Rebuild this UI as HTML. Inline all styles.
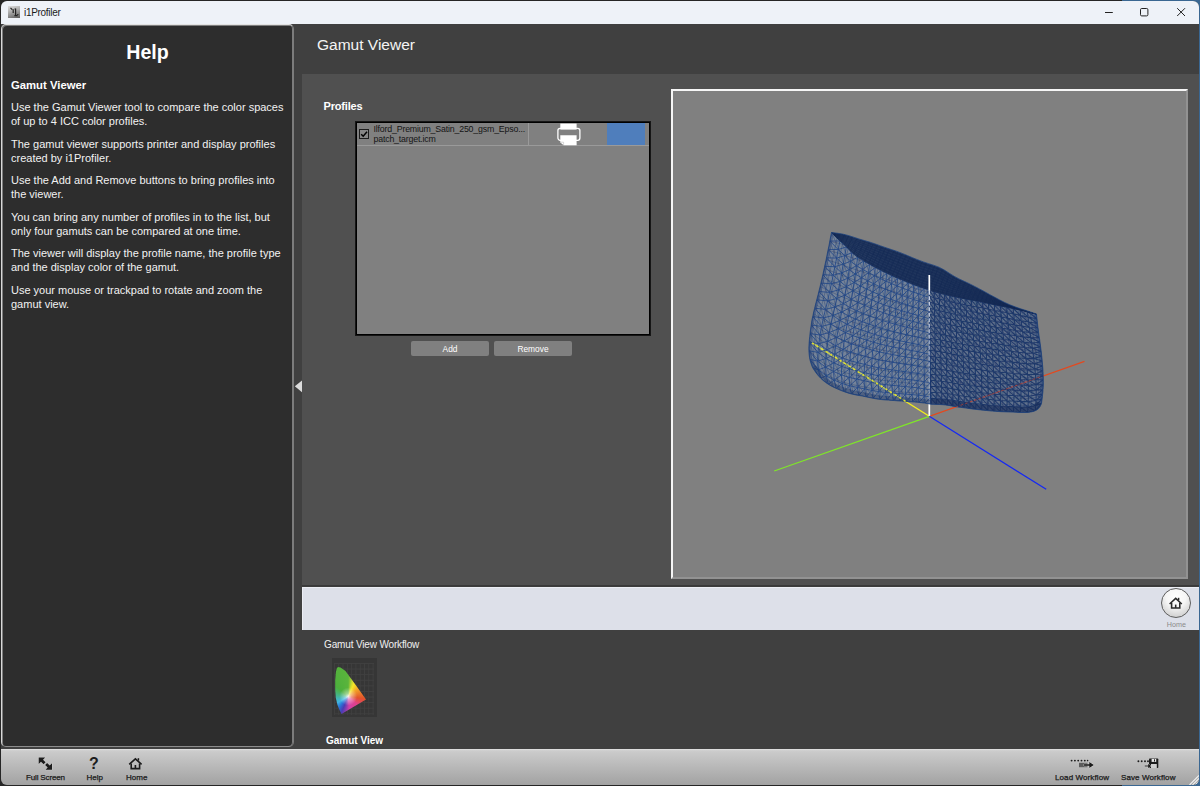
<!DOCTYPE html>
<html>
<head>
<meta charset="utf-8">
<title>i1Profiler</title>
<style>
html,body{margin:0;padding:0;}
body{width:1200px;height:786px;overflow:hidden;position:relative;background:#262626;font-family:"Liberation Sans",sans-serif;}
.abs{position:absolute;}
#bgR{left:1122px;top:0;width:78px;height:786px;background:#3a6792;}
#win{left:1px;top:1px;width:1198px;height:783.6px;border-radius:6px;overflow:hidden;background:#404040;}
#title{left:0;top:0;width:1198px;height:23px;background:#eef2f8;}
#title .t{left:23px;top:6px;font-size:10px;line-height:12px;color:#1a1a1a;letter-spacing:-0.3px;}
#help{left:0px;top:23px;width:291px;height:720.5px;background:#2d2d2d;border:1px solid #7c7c7c;border-color:#e2e2e2 #7c7c7c #8c8c8c #d8d8d8;border-radius:5px;box-shadow:inset 1px 1px 0 #7e7e7e,inset -1px 0 0 #7c7c7c;}
#help h1{position:absolute;left:1px;width:289px;top:15.5px;margin:0;text-align:center;font-size:19.6px;font-weight:bold;color:#fff;}
#help .hd{position:absolute;left:9px;top:54px;font-size:11.3px;font-weight:bold;color:#fff;}
#help p{position:absolute;left:9px;margin:0;font-size:11px;line-height:14px;color:#f2f2f2;white-space:nowrap;}
#main{left:293px;top:23px;width:905px;height:724px;background:#404040;}
#mtitle{left:316px;top:35.4px;font-size:15.5px;color:#f4f4f4;}
#content{left:300.6px;top:73px;width:897.4px;height:511.2px;background:#505050;box-shadow:0 1.4px 0 #3a3a3a;}
#lightbar{left:300.6px;top:585.6px;width:897.4px;height:43.7px;background:#dde0e9;box-shadow:inset 1px 1px 0 #eceef4;}
#toolbar{left:0;top:747.6px;width:1198px;height:36px;background:linear-gradient(#e4e4e4 0,#cecece 1.6px,#cacaca 3px,#a2a2a2 100%);}

#plabel{left:322.6px;top:99.1px;font-size:11px;font-weight:bold;color:#fff;letter-spacing:-0.2px;}
#list{left:354.5px;top:121px;width:292.4px;height:211px;background:#808080;border:1px solid #000;box-shadow:0 0 0 1px rgba(0,0,0,0.72);}
#row{left:0;top:0;width:292.4px;height:22px;border-bottom:1px solid #9a9a9a;}
#cb{left:2.5px;top:6px;width:8px;height:8px;border:1px solid #1c1c1c;background:#858585;}
#rtxt{left:17px;top:1.8px;font-size:8.8px;line-height:9.8px;color:#151515;white-space:nowrap;letter-spacing:-0.18px;}
#sep1{left:171.8px;top:0;width:1px;height:22px;background:#9a9a9a;}
#swatch{left:250.8px;top:0;width:38px;height:22px;background:#4f7ebc;}
.btn{position:absolute;top:340px;width:78px;height:15px;border-radius:2px;background:#808080;color:#fff;font-size:8.4px;line-height:17.5px;text-align:center;}
#viewer{left:670px;top:88px;width:513px;height:486px;background:#808080;border:2px solid #fff;border-color:#f6f6f6 #929292 #929292 #f6f6f6;}
#homebtn{left:1160px;top:587px;width:28.4px;height:28.4px;border-radius:50%;border:1.2px solid #5e5e5e;background:radial-gradient(circle at 50% 30%,#ffffff 0,#f6f6f6 40%,#d4d4d4 78%,#c2c2c2 100%);}
#homelbl{left:1160px;top:619px;width:30.8px;text-align:center;font-size:7.2px;line-height:9px;color:#8a8a8a;}
#wflabel{left:323px;top:638.2px;font-size:10px;letter-spacing:-0.15px;color:#f0f0f0;}
#gicon{left:331px;top:657px;width:45px;height:59px;background:#363636;}
#ggrid{left:1.5px;top:5px;width:40px;height:52px;background-image:linear-gradient(to right,#4a4a4a 1px,transparent 1px),linear-gradient(to bottom,#4a4a4a 1px,transparent 1px);background-size:4.3px 5.6px;opacity:0.5;}
#ghorse{left:0;top:0;width:45px;height:59px;clip-path:polygon(5.9px 9.1px,8.5px 9.6px,13.5px 13.1px,19.7px 21.6px,25px 28.7px,34px 41.6px,9.5px 55.9px,7.5px 52px,5.5px 47px,3.8px 40px,3.2px 32px,3.2px 22px,3.9px 14px,4.8px 10.5px);
 background:radial-gradient(circle at 16.2px 38.5px,rgba(255,255,255,0.9) 0,rgba(255,255,255,0.45) 3px,rgba(255,255,255,0) 9px),conic-gradient(from 0deg at 16.2px 38.5px,#5ab43c 0deg,#c4d632 14deg,#f4e628 24deg,#f2a428 50deg,#e2522a 98deg,#e0408a 132deg,#d040a8 175deg,#4a3cb4 203deg,#2a78d8 222deg,#40b4e4 240deg,#44b48c 275deg,#4caf3c 310deg,#5ab43c 360deg);}
#gvlabel{left:325px;top:734px;font-size:10px;font-weight:bold;color:#fff;}

#appicon{left:6.5px;top:5px;width:12px;height:12px;background:linear-gradient(160deg,#e0e0e0 0%,#a8a8a8 45%,#5a5a5a 100%);}
.tl{position:absolute;font-size:8px;color:#1a1a1a;white-space:nowrap;top:24.4px;line-height:9px;text-align:center;-webkit-text-stroke:0.25px #1a1a1a;}

</style>
</head>
<body>
<div id="bgR" class="abs"></div>
<div id="win" class="abs">
  <div id="title" class="abs"><div id="appicon" class="abs"><svg width="12" height="12" viewBox="0 0 12 12" style="position:absolute;left:0;top:0"><path d="M2.5 1.8 L4.2 3.6 M5.2 3.2 V7 M7.6 2.6 V9.6 M6.6 3.4 L7.6 2.6 M6.4 9.6 H9.6 M9.8 8 V9" stroke="#222" stroke-width="1.2" fill="none"/></svg></div><span class="abs t">i1Profiler</span>
    <svg class="abs" style="left:1100px;top:4px" width="92" height="16" viewBox="1101 5 92 16">
      <path d="M1105 12.5 H1112.8" stroke="#222" stroke-width="1" fill="none"/>
      <rect x="1140.5" y="8.5" width="7.4" height="7.4" rx="1.2" fill="none" stroke="#222" stroke-width="1"/>
      <path d="M1177.2 8.2 L1185 16 M1185 8.2 L1177.2 16" stroke="#222" stroke-width="1" fill="none"/>
    </svg></div>
  <div id="main" class="abs"></div>
  <div id="mtitle" class="abs">Gamut Viewer</div>
  <div id="content" class="abs"></div>
  <div id="lightbar" class="abs"></div>

  <div id="plabel" class="abs">Profiles</div>
  <div id="list" class="abs">
    <div id="row" class="abs">
      <div id="cb" class="abs"><svg width="8" height="8" viewBox="0 0 8 8" style="position:absolute;left:0;top:0"><path d="M1.2 4.2 L3.2 6.2 L7 1.8" fill="none" stroke="#000" stroke-width="1.5"/></svg></div>
      <div id="rtxt" class="abs">Ilford_Premium_Satin_250_gsm_Epso...<br>patch_target.icm</div>
      <div id="sep1" class="abs"></div>
      <svg class="abs" style="left:199px;top:0" width="28" height="23" viewBox="0 0 28 23">
        <rect x="4.3" y="0.6" width="16.3" height="6" fill="#fff"/>
        <rect x="1.9" y="5.3" width="22" height="12" rx="2.2" fill="none" stroke="#fff" stroke-width="1.3"/>
        <path d="M4.3 12.3 H20.6 V22.2 H7.6 L4.3 19.4 Z" fill="#fff"/>
        <path d="M4.6 19.2 L7.6 19.2 L7.6 22" fill="none" stroke="#bbb" stroke-width="0.6"/>
      </svg>
      <div id="swatch" class="abs"></div>
    </div>
  </div>
  <div class="btn" style="left:410px">Add</div>
  <div class="btn" style="left:493px">Remove</div>
  <div id="viewer" class="abs"><!--MESH--></div>
  <!--MESH_START--><svg class="abs" style="left:0;top:0" width="1198" height="784" viewBox="1 1 1198 784">
<defs><clipPath id="sil"><path d="M831.5 232.5L837.1 233.2L842.7 234.1L848.3 235.5L853.7 237.2L859.1 239.0L864.5 240.6L870.0 242.2L875.4 244.0L880.7 245.9L886.1 247.8L891.5 249.6L896.9 251.4L902.2 253.4L907.5 255.6L912.7 257.8L918.0 259.9L923.3 261.9L928.7 263.7L934.1 265.4L939.4 267.4L944.4 270.1L949.2 273.2L954.0 276.2L959.0 278.9L964.2 281.3L969.3 283.7L974.4 286.3L979.4 288.9L984.4 291.6L989.4 294.4L994.4 297.1L999.4 299.8L1004.5 302.4L1009.6 304.7L1014.9 306.8L1020.3 308.7L1025.7 310.4L1031.1 312.2L1036.5 314.0L1036.5 314.0L1036.7 316.3L1037.0 318.6L1037.2 320.9L1037.5 323.2L1037.7 325.5L1038.0 327.8L1038.3 330.0L1038.6 332.3L1038.9 334.6L1039.2 336.9L1039.6 339.2L1039.9 341.5L1040.2 343.8L1040.5 346.0L1040.8 348.3L1041.1 350.6L1041.4 352.9L1041.6 355.2L1041.9 357.5L1042.1 359.8L1042.3 362.1L1042.5 364.4L1042.7 366.7L1042.9 369.0L1043.0 371.3L1043.1 373.6L1043.2 375.9L1043.3 378.2L1043.3 380.5L1043.3 382.8L1043.3 385.1L1043.2 387.4L1043.0 389.7L1042.9 392.0L1042.6 394.3L1042.4 396.6L1042.1 398.9L1041.8 401.2L1041.5 403.5L1041.5 403.5L1040.3 406.2L1038.6 408.6L1036.2 410.3L1033.5 411.4L1030.6 412.0L1027.7 412.4L1024.8 412.5L1021.8 412.5L1018.9 412.4L1015.9 412.2L1013.0 412.1L1010.1 412.0L1007.1 411.9L1004.2 411.8L1001.2 411.7L998.3 411.5L995.3 411.3L992.4 411.1L989.5 410.8L986.5 410.5L983.6 410.2L980.7 409.9L977.8 409.6L974.8 409.2L971.9 408.9L969.0 408.5L966.1 408.1L963.2 407.7L960.2 407.3L957.3 406.9L954.4 406.4L951.5 405.9L948.6 405.4L945.7 405.0L942.8 404.7L939.8 404.5L936.9 404.4L933.9 404.3L931.0 404.2L931.0 404.2L927.7 403.6L924.5 403.1L921.2 402.7L917.9 402.3L914.6 402.0L911.4 401.8L908.1 401.6L904.8 401.3L901.5 401.1L898.2 400.9L894.9 400.6L891.6 400.4L888.3 400.1L885.0 399.9L881.7 399.6L878.4 399.2L875.2 398.7L871.9 398.1L868.7 397.4L865.5 396.7L862.2 396.0L859.0 395.5L855.7 394.9L852.5 394.2L849.3 393.4L846.2 392.4L843.1 391.3L840.0 390.1L837.0 388.8L834.0 387.4L831.0 385.9L828.2 384.2L825.4 382.3L822.9 380.3L820.5 378.0L818.2 375.6L816.2 373.0L814.3 370.3L812.5 367.5L812.5 367.5L811.3 364.2L810.2 360.8L809.5 357.4L809.1 353.9L808.9 350.3L808.9 346.8L809.1 343.3L809.4 339.7L809.8 336.2L810.1 332.7L810.6 329.2L811.1 325.7L811.6 322.2L812.2 318.7L813.0 315.3L813.7 311.8L814.6 308.4L815.4 304.9L816.3 301.5L817.2 298.1L818.1 294.7L818.9 291.3L819.8 287.8L820.6 284.4L821.4 280.9L822.2 277.5L823.0 274.1L823.7 270.6L824.5 267.1L825.2 263.7L826.0 260.2L826.7 256.8L827.4 253.3L828.1 249.8L828.8 246.4L829.5 242.9L830.1 239.4L830.8 236.0L831.5 232.5Z"/></clipPath><linearGradient id="lidg" gradientUnits="userSpaceOnUse" x1="831" y1="0" x2="1036" y2="0"><stop offset="0" stop-color="#172e58" stop-opacity="0.8"/><stop offset="0.25" stop-color="#162c56" stop-opacity="0.9"/><stop offset="1" stop-color="#152a54" stop-opacity="0.93"/></linearGradient><linearGradient id="wl" gradientUnits="userSpaceOnUse" x1="0" y1="290" x2="0" y2="403"><stop offset="0" stop-color="#eef3fd" stop-opacity="0.9"/><stop offset="0.5" stop-color="#dfe8fa" stop-opacity="0.6"/><stop offset="1" stop-color="#cfdcf5" stop-opacity="0.28"/></linearGradient><filter id="soft" x="-5%" y="-5%" width="110%" height="110%"><feGaussianBlur stdDeviation="0.45"/></filter></defs>
<g stroke-width="1.3" stroke-linecap="butt" fill="none">
<path d="M929.3 416.3 L1084.5 361.3" stroke="#e2491f"/>
<path d="M929.3 416.3 L812.1 342.9" stroke="#f2ee1c"/>
<path d="M929.3 403 V416.3" stroke="#fff" stroke-width="1.7"/>
</g>
<path d="M831.5 232.5L837.1 233.2L842.7 234.1L848.3 235.5L853.7 237.2L859.1 239.0L864.5 240.6L870.0 242.2L875.4 244.0L880.7 245.9L886.1 247.8L891.5 249.6L896.9 251.4L902.2 253.4L907.5 255.6L912.7 257.8L918.0 259.9L923.3 261.9L928.7 263.7L934.1 265.4L939.4 267.4L944.4 270.1L949.2 273.2L954.0 276.2L959.0 278.9L964.2 281.3L969.3 283.7L974.4 286.3L979.4 288.9L984.4 291.6L989.4 294.4L994.4 297.1L999.4 299.8L1004.5 302.4L1009.6 304.7L1014.9 306.8L1020.3 308.7L1025.7 310.4L1031.1 312.2L1036.5 314.0L1036.5 314.0L1036.7 316.3L1037.0 318.6L1037.2 320.9L1037.5 323.2L1037.7 325.5L1038.0 327.8L1038.3 330.0L1038.6 332.3L1038.9 334.6L1039.2 336.9L1039.6 339.2L1039.9 341.5L1040.2 343.8L1040.5 346.0L1040.8 348.3L1041.1 350.6L1041.4 352.9L1041.6 355.2L1041.9 357.5L1042.1 359.8L1042.3 362.1L1042.5 364.4L1042.7 366.7L1042.9 369.0L1043.0 371.3L1043.1 373.6L1043.2 375.9L1043.3 378.2L1043.3 380.5L1043.3 382.8L1043.3 385.1L1043.2 387.4L1043.0 389.7L1042.9 392.0L1042.6 394.3L1042.4 396.6L1042.1 398.9L1041.8 401.2L1041.5 403.5L1041.5 403.5L1040.3 406.2L1038.6 408.6L1036.2 410.3L1033.5 411.4L1030.6 412.0L1027.7 412.4L1024.8 412.5L1021.8 412.5L1018.9 412.4L1015.9 412.2L1013.0 412.1L1010.1 412.0L1007.1 411.9L1004.2 411.8L1001.2 411.7L998.3 411.5L995.3 411.3L992.4 411.1L989.5 410.8L986.5 410.5L983.6 410.2L980.7 409.9L977.8 409.6L974.8 409.2L971.9 408.9L969.0 408.5L966.1 408.1L963.2 407.7L960.2 407.3L957.3 406.9L954.4 406.4L951.5 405.9L948.6 405.4L945.7 405.0L942.8 404.7L939.8 404.5L936.9 404.4L933.9 404.3L931.0 404.2L931.0 404.2L927.7 403.6L924.5 403.1L921.2 402.7L917.9 402.3L914.6 402.0L911.4 401.8L908.1 401.6L904.8 401.3L901.5 401.1L898.2 400.9L894.9 400.6L891.6 400.4L888.3 400.1L885.0 399.9L881.7 399.6L878.4 399.2L875.2 398.7L871.9 398.1L868.7 397.4L865.5 396.7L862.2 396.0L859.0 395.5L855.7 394.9L852.5 394.2L849.3 393.4L846.2 392.4L843.1 391.3L840.0 390.1L837.0 388.8L834.0 387.4L831.0 385.9L828.2 384.2L825.4 382.3L822.9 380.3L820.5 378.0L818.2 375.6L816.2 373.0L814.3 370.3L812.5 367.5L812.5 367.5L811.3 364.2L810.2 360.8L809.5 357.4L809.1 353.9L808.9 350.3L808.9 346.8L809.1 343.3L809.4 339.7L809.8 336.2L810.1 332.7L810.6 329.2L811.1 325.7L811.6 322.2L812.2 318.7L813.0 315.3L813.7 311.8L814.6 308.4L815.4 304.9L816.3 301.5L817.2 298.1L818.1 294.7L818.9 291.3L819.8 287.8L820.6 284.4L821.4 280.9L822.2 277.5L823.0 274.1L823.7 270.6L824.5 267.1L825.2 263.7L826.0 260.2L826.7 256.8L827.4 253.3L828.1 249.8L828.8 246.4L829.5 242.9L830.1 239.4L830.8 236.0L831.5 232.5Z" fill="#5c8cd2" fill-opacity="0.31"/>
<path d="M929.2 290.3L931.9 291.1L934.6 291.9L937.3 292.6L940.0 293.4L942.8 294.1L945.5 294.8L948.2 295.5L951.0 296.1L953.7 296.7L956.5 297.3L959.3 297.8L962.0 298.4L964.8 298.9L967.6 299.4L970.3 300.0L973.1 300.5L975.9 301.0L978.6 301.6L981.4 302.1L984.2 302.7L986.9 303.3L989.7 303.8L992.4 304.4L995.2 304.9L998.0 305.5L1000.7 306.0L1003.5 306.6L1006.3 307.1L1009.0 307.6L1011.8 308.2L1014.6 308.8L1017.3 309.4L1020.1 310.0L1022.8 310.6L1025.6 311.3L1028.3 312.0L1031.0 312.6L1033.8 313.3L1036.5 314.0L1036.5 314.0L1036.7 316.3L1037.0 318.6L1037.2 320.9L1037.5 323.2L1037.7 325.5L1038.0 327.8L1038.3 330.0L1038.6 332.3L1038.9 334.6L1039.2 336.9L1039.6 339.2L1039.9 341.5L1040.2 343.8L1040.5 346.0L1040.8 348.3L1041.1 350.6L1041.4 352.9L1041.6 355.2L1041.9 357.5L1042.1 359.8L1042.3 362.1L1042.5 364.4L1042.7 366.7L1042.9 369.0L1043.0 371.3L1043.1 373.6L1043.2 375.9L1043.3 378.2L1043.3 380.5L1043.3 382.8L1043.3 385.1L1043.2 387.4L1043.0 389.7L1042.9 392.0L1042.6 394.3L1042.4 396.6L1042.1 398.9L1041.8 401.2L1041.5 403.5L1041.5 403.5L1040.3 406.2L1038.6 408.6L1036.2 410.3L1033.5 411.4L1030.6 412.0L1027.7 412.4L1024.8 412.5L1021.8 412.5L1018.9 412.4L1015.9 412.2L1013.0 412.1L1010.1 412.0L1007.1 411.9L1004.2 411.8L1001.2 411.7L998.3 411.5L995.3 411.3L992.4 411.1L989.5 410.8L986.5 410.5L983.6 410.2L980.7 409.9L977.8 409.6L974.8 409.2L971.9 408.9L969.0 408.5L966.1 408.1L963.2 407.7L960.2 407.3L957.3 406.9L954.4 406.4L951.5 405.9L948.6 405.4L945.7 405.0L942.8 404.7L939.8 404.5L936.9 404.4L933.9 404.3L931.0 404.2L931.0 404.2L930.9 401.3L930.9 398.4L930.8 395.4L930.7 392.5L930.6 389.6L930.6 386.7L930.5 383.8L930.4 380.8L930.4 377.9L930.3 375.0L930.2 372.1L930.2 369.2L930.1 366.2L930.1 363.3L930.0 360.4L930.0 357.5L929.9 354.6L929.9 351.6L929.8 348.7L929.8 345.8L929.8 342.9L929.7 340.0L929.7 337.0L929.6 334.1L929.6 331.2L929.6 328.3L929.5 325.3L929.5 322.4L929.5 319.5L929.5 316.6L929.4 313.7L929.4 310.7L929.4 307.8L929.3 304.9L929.3 302.0L929.3 299.1L929.3 296.1L929.2 293.2L929.2 290.3Z" fill="#142c5a" fill-opacity="0.2"/>
<g clip-path="url(#sil)" fill="none"><g filter="url(#soft)">
<path d="M831.5 232.5L829.7 241.5L827.9 250.5L826.1 259.5L824.2 268.5L822.2 277.5L820.1 286.4L817.9 295.4L815.6 304.3L813.4 313.2L811.6 322.2L810.3 331.3L809.4 340.4L808.9 349.6L809.7 358.8L812.5 367.5M838.0 233.3L836.1 242.7L834.1 252.0L832.2 261.4L830.1 270.7L828.0 280.0L825.8 289.3L823.5 298.6L821.0 307.8L818.7 317.1L816.8 326.4L815.3 335.9L814.2 345.3L813.5 354.9L814.1 364.3L816.5 373.4M844.4 234.5L842.4 244.1L840.4 253.7L838.3 263.4L836.2 273.0L834.0 282.6L831.7 292.1L829.3 301.7L826.8 311.2L824.4 320.8L822.4 330.4L820.8 340.1L819.5 349.9L818.7 359.7L819.1 369.4L821.3 378.8M850.7 236.2L848.6 246.1L846.6 255.9L844.5 265.7L842.4 275.5L840.2 285.3L837.9 295.0L835.5 304.7L833.0 314.5L830.5 324.2L828.5 334.0L826.8 343.9L825.5 353.8L824.6 363.8L824.8 373.7L826.8 383.3M856.9 238.3L854.9 248.2L852.8 258.1L850.8 268.0L848.7 277.9L846.5 287.8L844.3 297.7L841.9 307.5L839.4 317.3L837.0 327.2L835.0 337.1L833.3 347.1L832.0 357.1L831.0 367.2L831.2 377.2L833.0 386.9M863.1 240.1L861.1 250.1L859.2 260.1L857.2 270.1L855.1 280.1L853.0 290.0L850.8 300.0L848.5 309.9L846.1 319.8L843.7 329.7L841.7 339.7L840.1 349.8L838.7 359.9L837.7 370.0L837.8 380.1L839.5 389.9M869.4 242.0L867.4 252.0L865.5 262.1L863.6 272.1L861.6 282.1L859.6 292.1L857.4 302.1L855.2 312.1L852.8 322.0L850.5 332.0L848.6 342.0L847.0 352.1L845.6 362.3L844.6 372.5L844.6 382.6L846.2 392.4M875.5 244.1L873.7 254.1L871.9 264.1L870.0 274.1L868.1 284.1L866.1 294.1L864.1 304.1L861.9 314.1L859.6 324.0L857.5 334.0L855.5 344.0L854.0 354.1L852.7 364.2L851.7 374.4L851.6 384.5L853.1 394.3M881.7 246.2L879.9 256.2L878.2 266.2L876.4 276.1L874.6 286.1L872.7 296.0L870.8 306.0L868.7 315.8L866.5 325.7L864.4 335.6L862.6 345.6L861.1 355.7L859.8 365.7L858.8 375.8L858.8 385.9L860.2 395.7M887.9 248.4L886.2 258.3L884.5 268.2L882.8 278.1L881.1 288.0L879.3 297.9L877.5 307.8L875.5 317.6L873.4 327.5L871.4 337.3L869.6 347.3L868.2 357.2L867.0 367.3L866.0 377.3L865.9 387.3L867.2 397.1M894.0 250.4L892.4 260.3L890.8 270.2L889.2 280.1L887.6 289.9L885.9 299.8L884.2 309.6L882.3 319.4L880.3 329.2L878.4 339.1L876.7 348.9L875.3 358.9L874.1 368.9L873.1 378.9L873.0 388.8L874.2 398.5M900.2 252.7L898.7 262.5L897.1 272.3L895.6 282.1L894.1 291.8L892.5 301.6L890.9 311.4L889.1 321.1L887.2 330.8L885.4 340.6L883.8 350.4L882.4 360.2L881.3 370.1L880.3 380.0L880.2 389.9L881.3 399.5M906.2 255.1L904.8 264.8L903.4 274.4L902.0 284.1L900.6 293.8L899.1 303.4L897.5 313.0L895.9 322.7L894.1 332.3L892.4 341.9L890.9 351.6L889.6 361.3L888.5 371.1L887.6 380.9L887.4 390.7L888.4 400.2M912.2 257.6L910.9 267.1L909.6 276.7L908.3 286.2L907.0 295.8L905.6 305.3L904.2 314.8L902.6 324.3L901.0 333.7L899.4 343.2L897.9 352.8L896.7 362.4L895.7 372.0L894.8 381.7L894.6 391.3L895.6 400.7M918.3 260.1L917.1 269.5L915.9 278.9L914.6 288.3L913.4 297.7L912.2 307.1L910.9 316.5L909.4 325.8L907.9 335.2L906.4 344.5L905.0 354.0L903.9 363.4L902.9 373.0L902.0 382.5L901.8 392.0L902.7 401.2M924.4 262.3L923.3 271.6L922.2 280.9L921.0 290.2L919.9 299.5L918.8 308.7L917.6 318.0L916.2 327.2L914.8 336.4L913.4 345.7L912.1 355.0L911.1 364.4L910.1 373.7L909.3 383.1L909.1 392.5L909.9 401.6M930.6 264.3L929.6 273.5L928.5 282.7L927.5 291.9L926.5 301.1L925.5 310.2L924.3 319.4L923.1 328.5L921.8 337.7L920.4 346.8L919.3 356.0L918.3 365.3L917.4 374.5L916.6 383.8L916.3 393.1L917.0 402.2M936.8 266.4L935.8 275.5L934.9 284.6L934.0 293.7L933.0 302.8L932.1 311.9L931.1 321.0L929.9 330.1L928.7 339.2L927.5 348.2L926.4 357.4L925.4 366.6L924.6 375.8L923.8 385.0L923.5 394.2L924.1 403.2M942.7 269.1L941.8 278.1L941.0 287.1L940.2 296.1L939.4 305.1L938.5 314.1L937.6 323.1L936.6 332.0L935.5 341.0L934.4 350.0L933.4 359.0L932.5 368.1L931.7 377.2L930.9 386.3L930.6 395.3L931.2 404.2M948.2 272.6L947.5 281.4L946.8 290.2L946.1 299.0L945.5 307.8L944.8 316.5L944.0 325.3L943.1 334.1L942.1 342.8L941.2 351.6L940.3 360.4L939.5 369.3L938.8 378.2L938.1 387.1L937.8 395.9L938.4 404.6M953.7 276.0L953.1 284.7L952.6 293.3L952.0 301.8L951.5 310.4L951.0 319.0L950.3 327.6L949.6 336.1L948.8 344.7L948.0 353.3L947.2 361.9L946.6 370.5L945.9 379.2L945.3 387.9L945.0 396.5L945.5 405.0M959.5 279.1L959.0 287.5L958.6 296.0L958.2 304.5L957.7 312.9L957.3 321.3L956.8 329.8L956.2 338.2L955.5 346.6L954.8 355.1L954.2 363.5L953.6 372.1L953.0 380.6L952.4 389.1L952.2 397.7L952.6 406.0M965.4 281.9L965.0 290.2L964.7 298.6L964.4 306.9L964.1 315.3L963.8 323.6L963.4 331.9L962.9 340.3L962.3 348.6L961.7 356.9L961.2 365.3L960.7 373.7L960.2 382.1L959.6 390.6L959.3 399.0L959.7 407.2M971.3 284.7L971.0 292.9L970.8 301.2L970.5 309.4L970.4 317.6L970.2 325.8L969.9 334.0L969.6 342.2L969.1 350.5L968.6 358.7L968.1 366.9L967.7 375.2L967.3 383.5L966.8 391.8L966.5 400.1L966.8 408.3M977.1 287.7L976.9 295.8L976.8 303.9L976.7 312.0L976.6 320.0L976.6 328.1L976.4 336.2L976.2 344.2L975.9 352.3L975.5 360.4L975.1 368.5L974.8 376.6L974.4 384.8L973.9 393.0L973.7 401.1L973.9 409.1M982.8 290.8L982.8 298.7L982.8 306.6L982.8 314.6L982.9 322.5L982.9 330.4L982.9 338.3L982.8 346.3L982.6 354.2L982.3 362.1L982.1 370.1L981.9 378.1L981.6 386.1L981.1 394.1L980.8 402.1L981.0 409.9M988.5 293.9L988.6 301.7L988.7 309.5L988.9 317.3L989.1 325.0L989.2 332.8L989.4 340.5L989.4 348.3L989.3 356.1L989.2 363.8L989.1 371.7L988.9 379.5L988.7 387.3L988.3 395.2L988.0 403.0L988.1 410.7M994.2 297.1L994.4 304.7L994.7 312.3L994.9 319.9L995.3 327.5L995.6 335.1L995.8 342.7L996.0 350.3L996.1 357.9L996.0 365.5L996.0 373.1L996.0 380.8L995.8 388.5L995.5 396.1L995.2 403.8L995.2 411.3M1000.0 300.1L1000.3 307.6L1000.6 315.0L1001.0 322.4L1001.5 329.9L1001.9 337.3L1002.3 344.7L1002.6 352.1L1002.8 359.5L1002.9 367.0L1003.0 374.4L1003.1 381.9L1003.0 389.4L1002.7 396.9L1002.4 404.3L1002.4 411.7M1005.8 303.0L1006.2 310.3L1006.7 317.6L1007.2 324.8L1007.8 332.0L1008.4 339.3L1008.9 346.5L1009.3 353.8L1009.6 361.0L1009.9 368.3L1010.1 375.6L1010.2 382.9L1010.2 390.2L1009.9 397.5L1009.6 404.8L1009.6 412.0M1011.8 305.6L1012.3 312.7L1012.9 319.8L1013.5 326.9L1014.2 334.0L1014.9 341.1L1015.5 348.2L1016.1 355.3L1016.5 362.4L1016.8 369.5L1017.1 376.6L1017.3 383.8L1017.4 390.9L1017.2 398.1L1016.9 405.2L1016.7 412.3M1017.9 307.9L1018.6 314.8L1019.2 321.8L1019.9 328.8L1020.7 335.7L1021.5 342.7L1022.2 349.6L1022.9 356.6L1023.4 363.6L1023.9 370.5L1024.3 377.5L1024.5 384.6L1024.6 391.6L1024.4 398.6L1024.1 405.6L1023.9 412.5M1024.1 309.9L1024.8 316.7L1025.6 323.5L1026.4 330.3L1027.3 337.1L1028.2 343.9L1029.0 350.6L1029.7 357.4L1030.4 364.2L1030.9 371.0L1031.4 377.9L1031.7 384.7L1031.8 391.5L1031.7 398.4L1031.3 405.2L1031.0 411.9M1030.3 311.9L1031.1 318.4L1031.9 324.9L1032.7 331.4L1033.7 337.9L1034.6 344.4L1035.6 350.9L1036.4 357.3L1037.1 363.8L1037.7 370.4L1038.2 376.9L1038.5 383.4L1038.7 389.9L1038.5 396.5L1038.1 403.0L1037.7 409.4M1036.5 314.0L1037.1 320.0L1037.8 325.9L1038.5 331.9L1039.4 337.8L1040.2 343.8L1041.0 349.7L1041.7 355.7L1042.3 361.6L1042.8 367.6L1043.1 373.6L1043.3 379.6L1043.3 385.6L1042.9 391.6L1042.3 397.5L1041.5 403.5M831.5 232.5L838.0 233.3L844.4 234.5L850.7 236.2L856.9 238.3L863.1 240.1L869.4 242.0L875.5 244.1L881.7 246.2L887.9 248.4L894.0 250.4L900.2 252.7L906.2 255.1L912.2 257.6L918.3 260.1L924.4 262.3L930.6 264.3L936.8 266.4L942.7 269.1L948.2 272.6L953.7 276.0L959.5 279.1L965.4 281.9L971.3 284.7L977.1 287.7L982.8 290.8L988.5 293.9L994.2 297.1L1000.0 300.1L1005.8 303.0L1011.8 305.6L1017.9 307.9L1024.1 309.9L1030.3 311.9L1036.5 314.0M829.7 241.5L836.1 242.7L842.4 244.1L848.6 246.1L854.9 248.2L861.1 250.1L867.4 252.0L873.7 254.1L879.9 256.2L886.2 258.3L892.4 260.3L898.7 262.5L904.8 264.8L910.9 267.1L917.1 269.5L923.3 271.6L929.6 273.5L935.8 275.5L941.8 278.1L947.5 281.4L953.1 284.7L959.0 287.5L965.0 290.2L971.0 292.9L976.9 295.8L982.8 298.7L988.6 301.7L994.4 304.7L1000.3 307.6L1006.2 310.3L1012.3 312.7L1018.6 314.8L1024.8 316.7L1031.1 318.4L1037.1 320.0M827.9 250.5L834.1 252.0L840.4 253.7L846.6 255.9L852.8 258.1L859.2 260.1L865.5 262.1L871.9 264.1L878.2 266.2L884.5 268.2L890.8 270.2L897.1 272.3L903.4 274.4L909.6 276.7L915.9 278.9L922.2 280.9L928.5 282.7L934.9 284.6L941.0 287.1L946.8 290.2L952.6 293.3L958.6 296.0L964.7 298.6L970.8 301.2L976.8 303.9L982.8 306.6L988.7 309.5L994.7 312.3L1000.6 315.0L1006.7 317.6L1012.9 319.8L1019.2 321.8L1025.6 323.5L1031.9 324.9L1037.8 325.9M826.1 259.5L832.2 261.4L838.3 263.4L844.5 265.7L850.8 268.0L857.2 270.1L863.6 272.1L870.0 274.1L876.4 276.1L882.8 278.1L889.2 280.1L895.6 282.1L902.0 284.1L908.3 286.2L914.6 288.3L921.0 290.2L927.5 291.9L934.0 293.7L940.2 296.1L946.1 299.0L952.0 301.8L958.2 304.5L964.4 306.9L970.5 309.4L976.7 312.0L982.8 314.6L988.9 317.3L994.9 319.9L1001.0 322.4L1007.2 324.8L1013.5 326.9L1019.9 328.8L1026.4 330.3L1032.7 331.4L1038.5 331.9M824.2 268.5L830.1 270.7L836.2 273.0L842.4 275.5L848.7 277.9L855.1 280.1L861.6 282.1L868.1 284.1L874.6 286.1L881.1 288.0L887.6 289.9L894.1 291.8L900.6 293.8L907.0 295.8L913.4 297.7L919.9 299.5L926.5 301.1L933.0 302.8L939.4 305.1L945.5 307.8L951.5 310.4L957.7 312.9L964.1 315.3L970.4 317.6L976.6 320.0L982.9 322.5L989.1 325.0L995.3 327.5L1001.5 329.9L1007.8 332.0L1014.2 334.0L1020.7 335.7L1027.3 337.1L1033.7 337.9L1039.4 337.8M822.2 277.5L828.0 280.0L834.0 282.6L840.2 285.3L846.5 287.8L853.0 290.0L859.6 292.1L866.1 294.1L872.7 296.0L879.3 297.9L885.9 299.8L892.5 301.6L899.1 303.4L905.6 305.3L912.2 307.1L918.8 308.7L925.5 310.2L932.1 311.9L938.5 314.1L944.8 316.5L951.0 319.0L957.3 321.3L963.8 323.6L970.2 325.8L976.6 328.1L982.9 330.4L989.2 332.8L995.6 335.1L1001.9 337.3L1008.4 339.3L1014.9 341.1L1021.5 342.7L1028.2 343.9L1034.6 344.4L1040.2 343.8M820.1 286.4L825.8 289.3L831.7 292.1L837.9 295.0L844.3 297.7L850.8 300.0L857.4 302.1L864.1 304.1L870.8 306.0L877.5 307.8L884.2 309.6L890.9 311.4L897.5 313.0L904.2 314.8L910.9 316.5L917.6 318.0L924.3 319.4L931.1 321.0L937.6 323.1L944.0 325.3L950.3 327.6L956.8 329.8L963.4 331.9L969.9 334.0L976.4 336.2L982.9 338.3L989.4 340.5L995.8 342.7L1002.3 344.7L1008.9 346.5L1015.5 348.2L1022.2 349.6L1029.0 350.6L1035.6 350.9L1041.0 349.7M817.9 295.4L823.5 298.6L829.3 301.7L835.5 304.7L841.9 307.5L848.5 309.9L855.2 312.1L861.9 314.1L868.7 315.8L875.5 317.6L882.3 319.4L889.1 321.1L895.9 322.7L902.6 324.3L909.4 325.8L916.2 327.2L923.1 328.5L929.9 330.1L936.6 332.0L943.1 334.1L949.6 336.1L956.2 338.2L962.9 340.3L969.6 342.2L976.2 344.2L982.8 346.3L989.4 348.3L996.0 350.3L1002.6 352.1L1009.3 353.8L1016.1 355.3L1022.9 356.6L1029.7 357.4L1036.4 357.3L1041.7 355.7M815.6 304.3L821.0 307.8L826.8 311.2L833.0 314.5L839.4 317.3L846.1 319.8L852.8 322.0L859.6 324.0L866.5 325.7L873.4 327.5L880.3 329.2L887.2 330.8L894.1 332.3L901.0 333.7L907.9 335.2L914.8 336.4L921.8 337.7L928.7 339.2L935.5 341.0L942.1 342.8L948.8 344.7L955.5 346.6L962.3 348.6L969.1 350.5L975.9 352.3L982.6 354.2L989.3 356.1L996.1 357.9L1002.8 359.5L1009.6 361.0L1016.5 362.4L1023.4 363.6L1030.4 364.2L1037.1 363.8L1042.3 361.6M813.4 313.2L818.7 317.1L824.4 320.8L830.5 324.2L837.0 327.2L843.7 329.7L850.5 332.0L857.5 334.0L864.4 335.6L871.4 337.3L878.4 339.1L885.4 340.6L892.4 341.9L899.4 343.2L906.4 344.5L913.4 345.7L920.4 346.8L927.5 348.2L934.4 350.0L941.2 351.6L948.0 353.3L954.8 355.1L961.7 356.9L968.6 358.7L975.5 360.4L982.3 362.1L989.2 363.8L996.0 365.5L1002.9 367.0L1009.9 368.3L1016.8 369.5L1023.9 370.5L1030.9 371.0L1037.7 370.4L1042.8 367.6M811.6 322.2L816.8 326.4L822.4 330.4L828.5 334.0L835.0 337.1L841.7 339.7L848.6 342.0L855.5 344.0L862.6 345.6L869.6 347.3L876.7 348.9L883.8 350.4L890.9 351.6L897.9 352.8L905.0 354.0L912.1 355.0L919.3 356.0L926.4 357.4L933.4 359.0L940.3 360.4L947.2 361.9L954.2 363.5L961.2 365.3L968.1 366.9L975.1 368.5L982.1 370.1L989.1 371.7L996.0 373.1L1003.0 374.4L1010.1 375.6L1017.1 376.6L1024.3 377.5L1031.4 377.9L1038.2 376.9L1043.1 373.6M810.3 331.3L815.3 335.9L820.8 340.1L826.8 343.9L833.3 347.1L840.1 349.8L847.0 352.1L854.0 354.1L861.1 355.7L868.2 357.2L875.3 358.9L882.4 360.2L889.6 361.3L896.7 362.4L903.9 363.4L911.1 364.4L918.3 365.3L925.4 366.6L932.5 368.1L939.5 369.3L946.6 370.5L953.6 372.1L960.7 373.7L967.7 375.2L974.8 376.6L981.9 378.1L988.9 379.5L996.0 380.8L1003.1 381.9L1010.2 382.9L1017.3 383.8L1024.5 384.6L1031.7 384.7L1038.5 383.4L1043.3 379.6M809.4 340.4L814.2 345.3L819.5 349.9L825.5 353.8L832.0 357.1L838.7 359.9L845.6 362.3L852.7 364.2L859.8 365.7L867.0 367.3L874.1 368.9L881.3 370.1L888.5 371.1L895.7 372.0L902.9 373.0L910.1 373.7L917.4 374.5L924.6 375.8L931.7 377.2L938.8 378.2L945.9 379.2L953.0 380.6L960.2 382.1L967.3 383.5L974.4 384.8L981.6 386.1L988.7 387.3L995.8 388.5L1003.0 389.4L1010.2 390.2L1017.4 390.9L1024.6 391.6L1031.8 391.5L1038.7 389.9L1043.3 385.6M808.9 349.6L813.5 354.9L818.7 359.7L824.6 363.8L831.0 367.2L837.7 370.0L844.6 372.5L851.7 374.4L858.8 375.8L866.0 377.3L873.1 378.9L880.3 380.0L887.6 380.9L894.8 381.7L902.0 382.5L909.3 383.1L916.6 383.8L923.8 385.0L930.9 386.3L938.1 387.1L945.3 387.9L952.4 389.1L959.6 390.6L966.8 391.8L973.9 393.0L981.1 394.1L988.3 395.2L995.5 396.1L1002.7 396.9L1009.9 397.5L1017.2 398.1L1024.4 398.6L1031.7 398.4L1038.5 396.5L1042.9 391.6M809.7 358.8L814.1 364.3L819.1 369.4L824.8 373.7L831.2 377.2L837.8 380.1L844.6 382.6L851.6 384.5L858.8 385.9L865.9 387.3L873.0 388.8L880.2 389.9L887.4 390.7L894.6 391.3L901.8 392.0L909.1 392.5L916.3 393.1L923.5 394.2L930.6 395.3L937.8 395.9L945.0 396.5L952.2 397.7L959.3 399.0L966.5 400.1L973.7 401.1L980.8 402.1L988.0 403.0L995.2 403.8L1002.4 404.3L1009.6 404.8L1016.9 405.2L1024.1 405.6L1031.3 405.2L1038.1 403.0L1042.3 397.5M812.5 367.5L816.5 373.4L821.3 378.8L826.8 383.3L833.0 386.9L839.5 389.9L846.2 392.4L853.1 394.3L860.2 395.7L867.2 397.1L874.2 398.5L881.3 399.5L888.4 400.2L895.6 400.7L902.7 401.2L909.9 401.6L917.0 402.2L924.1 403.2L931.2 404.2L938.4 404.6L945.5 405.0L952.6 406.0L959.7 407.2L966.8 408.3L973.9 409.1L981.0 409.9L988.1 410.7L995.2 411.3L1002.4 411.7L1009.6 412.0L1016.7 412.3L1023.9 412.5L1031.0 411.9L1037.7 409.4L1041.5 403.5M809.7 358.8L816.5 373.4M808.9 349.6L814.1 364.3L821.3 378.8M809.4 340.4L813.5 354.9L819.1 369.4L826.8 383.3M810.3 331.3L814.2 345.3L818.7 359.7L824.8 373.7L833.0 386.9M811.6 322.2L815.3 335.9L819.5 349.9L824.6 363.8L831.2 377.2L839.5 389.9M813.4 313.2L816.8 326.4L820.8 340.1L825.5 353.8L831.0 367.2L837.8 380.1L846.2 392.4M815.6 304.3L818.7 317.1L822.4 330.4L826.8 343.9L832.0 357.1L837.7 370.0L844.6 382.6L853.1 394.3M817.9 295.4L821.0 307.8L824.4 320.8L828.5 334.0L833.3 347.1L838.7 359.9L844.6 372.5L851.6 384.5L860.2 395.7M820.1 286.4L823.5 298.6L826.8 311.2L830.5 324.2L835.0 337.1L840.1 349.8L845.6 362.3L851.7 374.4L858.8 385.9L867.2 397.1M822.2 277.5L825.8 289.3L829.3 301.7L833.0 314.5L837.0 327.2L841.7 339.7L847.0 352.1L852.7 364.2L858.8 375.8L865.9 387.3L874.2 398.5M824.2 268.5L828.0 280.0L831.7 292.1L835.5 304.7L839.4 317.3L843.7 329.7L848.6 342.0L854.0 354.1L859.8 365.7L866.0 377.3L873.0 388.8L881.3 399.5M826.1 259.5L830.1 270.7L834.0 282.6L837.9 295.0L841.9 307.5L846.1 319.8L850.5 332.0L855.5 344.0L861.1 355.7L867.0 367.3L873.1 378.9L880.2 389.9L888.4 400.2M827.9 250.5L832.2 261.4L836.2 273.0L840.2 285.3L844.3 297.7L848.5 309.9L852.8 322.0L857.5 334.0L862.6 345.6L868.2 357.2L874.1 368.9L880.3 380.0L887.4 390.7L895.6 400.7M829.7 241.5L834.1 252.0L838.3 263.4L842.4 275.5L846.5 287.8L850.8 300.0L855.2 312.1L859.6 324.0L864.4 335.6L869.6 347.3L875.3 358.9L881.3 370.1L887.6 380.9L894.6 391.3L902.7 401.2M831.5 232.5L836.1 242.7L840.4 253.7L844.5 265.7L848.7 277.9L853.0 290.0L857.4 302.1L861.9 314.1L866.5 325.7L871.4 337.3L876.7 348.9L882.4 360.2L888.5 371.1L894.8 381.7L901.8 392.0L909.9 401.6M838.0 233.3L842.4 244.1L846.6 255.9L850.8 268.0L855.1 280.1L859.6 292.1L864.1 304.1L868.7 315.8L873.4 327.5L878.4 339.1L883.8 350.4L889.6 361.3L895.7 372.0L902.0 382.5L909.1 392.5L917.0 402.2M844.4 234.5L848.6 246.1L852.8 258.1L857.2 270.1L861.6 282.1L866.1 294.1L870.8 306.0L875.5 317.6L880.3 329.2L885.4 340.6L890.9 351.6L896.7 362.4L902.9 373.0L909.3 383.1L916.3 393.1L924.1 403.2M850.7 236.2L854.9 248.2L859.2 260.1L863.6 272.1L868.1 284.1L872.7 296.0L877.5 307.8L882.3 319.4L887.2 330.8L892.4 341.9L897.9 352.8L903.9 363.4L910.1 373.7L916.6 383.8L923.5 394.2L931.2 404.2M856.9 238.3L861.1 250.1L865.5 262.1L870.0 274.1L874.6 286.1L879.3 297.9L884.2 309.6L889.1 321.1L894.1 332.3L899.4 343.2L905.0 354.0L911.1 364.4L917.4 374.5L923.8 385.0L930.6 395.3L938.4 404.6M863.1 240.1L867.4 252.0L871.9 264.1L876.4 276.1L881.1 288.0L885.9 299.8L890.9 311.4L895.9 322.7L901.0 333.7L906.4 344.5L912.1 355.0L918.3 365.3L924.6 375.8L930.9 386.3L937.8 395.9L945.5 405.0M869.4 242.0L873.7 254.1L878.2 266.2L882.8 278.1L887.6 289.9L892.5 301.6L897.5 313.0L902.6 324.3L907.9 335.2L913.4 345.7L919.3 356.0L925.4 366.6L931.7 377.2L938.1 387.1L945.0 396.5L952.6 406.0M875.5 244.1L879.9 256.2L884.5 268.2L889.2 280.1L894.1 291.8L899.1 303.4L904.2 314.8L909.4 325.8L914.8 336.4L920.4 346.8L926.4 357.4L932.5 368.1L938.8 378.2L945.3 387.9L952.2 397.7L959.7 407.2M881.7 246.2L886.2 258.3L890.8 270.2L895.6 282.1L900.6 293.8L905.6 305.3L910.9 316.5L916.2 327.2L921.8 337.7L927.5 348.2L933.4 359.0L939.5 369.3L945.9 379.2L952.4 389.1L959.3 399.0L966.8 408.3M887.9 248.4L892.4 260.3L897.1 272.3L902.0 284.1L907.0 295.8L912.2 307.1L917.6 318.0L923.1 328.5L928.7 339.2L934.4 350.0L940.3 360.4L946.6 370.5L953.0 380.6L959.6 390.6L966.5 400.1L973.9 409.1M894.0 250.4L898.7 262.5L903.4 274.4L908.3 286.2L913.4 297.7L918.8 308.7L924.3 319.4L929.9 330.1L935.5 341.0L941.2 351.6L947.2 361.9L953.6 372.1L960.2 382.1L966.8 391.8L973.7 401.1L981.0 409.9M900.2 252.7L904.8 264.8L909.6 276.7L914.6 288.3L919.9 299.5L925.5 310.2L931.1 321.0L936.6 332.0L942.1 342.8L948.0 353.3L954.2 363.5L960.7 373.7L967.3 383.5L973.9 393.0L980.8 402.1L988.1 410.7M906.2 255.1L910.9 267.1L915.9 278.9L921.0 290.2L926.5 301.1L932.1 311.9L937.6 323.1L943.1 334.1L948.8 344.7L954.8 355.1L961.2 365.3L967.7 375.2L974.4 384.8L981.1 394.1L988.0 403.0L995.2 411.3M912.2 257.6L917.1 269.5L922.2 280.9L927.5 291.9L933.0 302.8L938.5 314.1L944.0 325.3L949.6 336.1L955.5 346.6L961.7 356.9L968.1 366.9L974.8 376.6L981.6 386.1L988.3 395.2L995.2 403.8L1002.4 411.7M918.3 260.1L923.3 271.6L928.5 282.7L934.0 293.7L939.4 305.1L944.8 316.5L950.3 327.6L956.2 338.2L962.3 348.6L968.6 358.7L975.1 368.5L981.9 378.1L988.7 387.3L995.5 396.1L1002.4 404.3L1009.6 412.0M924.4 262.3L929.6 273.5L934.9 284.6L940.2 296.1L945.5 307.8L951.0 319.0L956.8 329.8L962.9 340.3L969.1 350.5L975.5 360.4L982.1 370.1L988.9 379.5L995.8 388.5L1002.7 396.9L1009.6 404.8L1016.7 412.3M930.6 264.3L935.8 275.5L941.0 287.1L946.1 299.0L951.5 310.4L957.3 321.3L963.4 331.9L969.6 342.2L975.9 352.3L982.3 362.1L989.1 371.7L996.0 380.8L1003.0 389.4L1009.9 397.5L1016.9 405.2L1023.9 412.5M936.8 266.4L941.8 278.1L946.8 290.2L952.0 301.8L957.7 312.9L963.8 323.6L969.9 334.0L976.2 344.2L982.6 354.2L989.2 363.8L996.0 373.1L1003.1 381.9L1010.2 390.2L1017.2 398.1L1024.1 405.6L1031.0 411.9M942.7 269.1L947.5 281.4L952.6 293.3L958.2 304.5L964.1 315.3L970.2 325.8L976.4 336.2L982.8 346.3L989.3 356.1L996.0 365.5L1003.0 374.4L1010.2 382.9L1017.4 390.9L1024.4 398.6L1031.3 405.2L1037.7 409.4M948.2 272.6L953.1 284.7L958.6 296.0L964.4 306.9L970.4 317.6L976.6 328.1L982.9 338.3L989.4 348.3L996.1 357.9L1002.9 367.0L1010.1 375.6L1017.3 383.8L1024.6 391.6L1031.7 398.4L1038.1 403.0L1041.5 403.5M953.7 276.0L959.0 287.5L964.7 298.6L970.5 309.4L976.6 320.0L982.9 330.4L989.4 340.5L996.0 350.3L1002.8 359.5L1009.9 368.3L1017.1 376.6L1024.5 384.6L1031.8 391.5L1038.5 396.5L1042.3 397.5M959.5 279.1L965.0 290.2L970.8 301.2L976.7 312.0L982.9 322.5L989.2 332.8L995.8 342.7L1002.6 352.1L1009.6 361.0L1016.8 369.5L1024.3 377.5L1031.7 384.7L1038.7 389.9L1042.9 391.6M965.4 281.9L971.0 292.9L976.8 303.9L982.8 314.6L989.1 325.0L995.6 335.1L1002.3 344.7L1009.3 353.8L1016.5 362.4L1023.9 370.5L1031.4 377.9L1038.5 383.4L1043.3 385.6M971.3 284.7L976.9 295.8L982.8 306.6L988.9 317.3L995.3 327.5L1001.9 337.3L1008.9 346.5L1016.1 355.3L1023.4 363.6L1030.9 371.0L1038.2 376.9L1043.3 379.6M977.1 287.7L982.8 298.7L988.7 309.5L994.9 319.9L1001.5 329.9L1008.4 339.3L1015.5 348.2L1022.9 356.6L1030.4 364.2L1037.7 370.4L1043.1 373.6M982.8 290.8L988.6 301.7L994.7 312.3L1001.0 322.4L1007.8 332.0L1014.9 341.1L1022.2 349.6L1029.7 357.4L1037.1 363.8L1042.8 367.6M988.5 293.9L994.4 304.7L1000.6 315.0L1007.2 324.8L1014.2 334.0L1021.5 342.7L1029.0 350.6L1036.4 357.3L1042.3 361.6M994.2 297.1L1000.3 307.6L1006.7 317.6L1013.5 326.9L1020.7 335.7L1028.2 343.9L1035.6 350.9L1041.7 355.7M1000.0 300.1L1006.2 310.3L1012.9 319.8L1019.9 328.8L1027.3 337.1L1034.6 344.4L1041.0 349.7M1005.8 303.0L1012.3 312.7L1019.2 321.8L1026.4 330.3L1033.7 337.9L1040.2 343.8M1011.8 305.6L1018.6 314.8L1025.6 323.5L1032.7 331.4L1039.4 337.8M1017.9 307.9L1024.8 316.7L1031.9 324.9L1038.5 331.9M1024.1 309.9L1031.1 318.4L1037.8 325.9M1030.3 311.9L1037.1 320.0" stroke="#17305f" stroke-width="0.9" stroke-opacity="0.36"/>
<path d="M831.5 232.5L829.8 241.0L828.2 249.4L826.4 257.8L824.7 266.3L822.8 274.7L820.9 283.1L818.9 291.5L816.8 299.8L814.6 308.2L812.7 316.6L811.2 325.0L810.0 333.6L809.2 342.2L808.9 350.8L809.8 359.3L812.5 367.5M839.9 241.0L838.2 249.5L836.6 258.1L834.9 266.7L833.2 275.3L831.4 283.8L829.5 292.4L827.6 300.9L825.5 309.4L823.4 317.9L821.6 326.4L820.0 335.0L818.9 343.7L818.0 352.4L817.6 361.1L818.3 369.8L820.6 378.1M846.3 247.0L844.8 255.6L843.2 264.2L841.7 272.8L840.1 281.4L838.4 289.9L836.7 298.5L834.8 307.0L832.9 315.5L831.0 324.0L829.3 332.5L827.9 341.1L826.8 349.8L826.0 358.5L825.6 367.2L826.2 375.9L828.3 384.3M851.9 252.7L850.6 261.2L849.2 269.7L847.8 278.2L846.4 286.6L844.9 295.1L843.4 303.6L841.7 312.0L840.0 320.4L838.3 328.8L836.8 337.3L835.6 345.8L834.6 354.3L833.9 362.9L833.6 371.5L834.2 380.1L836.2 388.4M857.7 257.3L856.5 265.7L855.3 274.1L854.1 282.5L852.8 290.9L851.5 299.3L850.1 307.6L848.6 316.0L847.1 324.3L845.6 332.6L844.2 341.0L843.1 349.4L842.3 357.9L841.7 366.4L841.4 374.9L842.1 383.4L843.8 391.6M863.7 261.1L862.6 269.4L861.5 277.7L860.4 286.0L859.3 294.3L858.1 302.6L856.8 310.9L855.5 319.1L854.2 327.4L852.8 335.6L851.6 343.9L850.6 352.2L849.9 360.6L849.4 369.0L849.2 377.4L849.7 385.8L851.4 393.9M869.6 264.4L868.6 272.6L867.7 280.8L866.7 289.0L865.7 297.2L864.6 305.4L863.5 313.5L862.3 321.7L861.1 329.8L859.9 338.0L858.8 346.1L858.0 354.3L857.4 362.6L856.9 370.8L856.8 379.1L857.3 387.4L858.8 395.4M875.3 267.6L874.5 275.7L873.7 283.8L872.8 291.9L871.9 299.9L871.0 308.0L870.0 316.1L869.0 324.1L867.9 332.1L866.8 340.2L865.9 348.2L865.1 356.3L864.6 364.4L864.2 372.6L864.1 380.7L864.6 388.9L866.1 396.8M881.0 270.6L880.3 278.6L879.5 286.6L878.8 294.5L878.0 302.5L877.2 310.5L876.3 318.5L875.4 326.4L874.5 334.4L873.6 342.3L872.7 350.3L872.1 358.3L871.6 366.3L871.3 374.3L871.3 382.4L871.8 390.4L873.0 398.3M886.6 273.3L886.0 281.2L885.3 289.1L884.7 297.0L884.0 304.8L883.3 312.7L882.6 320.6L881.8 328.4L881.0 336.3L880.2 344.1L879.5 352.0L878.9 359.9L878.6 367.8L878.3 375.7L878.3 383.7L878.7 391.6L879.9 399.4M892.1 275.9L891.6 283.6L891.0 291.4L890.5 299.2L889.9 306.9L889.3 314.7L888.7 322.4L888.1 330.2L887.4 337.9L886.7 345.6L886.1 353.4L885.7 361.1L885.4 368.9L885.2 376.7L885.2 384.6L885.6 392.4L886.7 400.0M897.6 278.3L897.1 285.9L896.7 293.6L896.2 301.2L895.8 308.9L895.3 316.5L894.8 324.1L894.3 331.7L893.7 339.4L893.2 347.0L892.7 354.6L892.3 362.3L892.1 369.9L892.0 377.6L892.0 385.3L892.4 393.0L893.3 400.5M903.0 280.6L902.6 288.1L902.3 295.6L901.9 303.2L901.6 310.7L901.2 318.2L900.8 325.7L900.4 333.3L899.9 340.8L899.5 348.3L899.1 355.8L898.9 363.3L898.7 370.9L898.6 378.4L898.7 386.0L899.1 393.5L899.9 401.0M908.3 282.7L908.0 290.2L907.8 297.6L907.5 305.0L907.3 312.4L907.0 319.8L906.7 327.3L906.4 334.7L906.1 342.1L905.7 349.5L905.5 356.9L905.3 364.3L905.2 371.7L905.2 379.2L905.3 386.6L905.6 394.1L906.3 401.4M913.6 284.8L913.4 292.1L913.3 299.4L913.1 306.7L912.9 314.0L912.7 321.4L912.5 328.7L912.3 336.0L912.1 343.3L911.9 350.6L911.8 357.9L911.7 365.2L911.6 372.6L911.7 379.9L911.8 387.2L912.1 394.6L912.6 401.8M918.8 286.7L918.8 293.9L918.7 301.1L918.6 308.4L918.5 315.6L918.4 322.8L918.3 330.1L918.2 337.3L918.1 344.5L918.0 351.7L917.9 359.0L917.9 366.2L918.0 373.4L918.0 380.7L918.2 387.9L918.4 395.2L918.9 402.4M924.1 288.5L924.0 295.7L924.0 302.9L924.0 310.0L924.0 317.2L924.0 324.4L924.0 331.5L924.0 338.7L924.0 345.9L924.0 353.0L924.0 360.2L924.1 367.3L924.2 374.5L924.3 381.7L924.5 388.9L924.7 396.0L925.0 403.2M929.2 290.3L929.3 297.4L929.3 304.5L929.4 311.7L929.5 318.8L929.6 325.9L929.6 333.0L929.7 340.1L929.8 347.3L929.9 354.4L930.0 361.5L930.2 368.6L930.3 375.7L930.5 382.8L930.6 390.0L930.8 397.1L931.0 404.2M831.5 232.5L839.9 241.0L846.3 247.0L851.9 252.7L857.7 257.3L863.7 261.1L869.6 264.4L875.3 267.6L881.0 270.6L886.6 273.3L892.1 275.9L897.6 278.3L903.0 280.6L908.3 282.7L913.6 284.8L918.8 286.7L924.1 288.5L929.2 290.3M829.8 241.0L838.2 249.5L844.8 255.6L850.6 261.2L856.5 265.7L862.6 269.4L868.6 272.6L874.5 275.7L880.3 278.6L886.0 281.2L891.6 283.6L897.1 285.9L902.6 288.1L908.0 290.2L913.4 292.1L918.8 293.9L924.0 295.7L929.3 297.4M828.2 249.4L836.6 258.1L843.2 264.2L849.2 269.7L855.3 274.1L861.5 277.7L867.7 280.8L873.7 283.8L879.5 286.6L885.3 289.1L891.0 291.4L896.7 293.6L902.3 295.6L907.8 297.6L913.3 299.4L918.7 301.1L924.0 302.9L929.3 304.5M826.4 257.8L834.9 266.7L841.7 272.8L847.8 278.2L854.1 282.5L860.4 286.0L866.7 289.0L872.8 291.9L878.8 294.5L884.7 297.0L890.5 299.2L896.2 301.2L901.9 303.2L907.5 305.0L913.1 306.7L918.6 308.4L924.0 310.0L929.4 311.7M824.7 266.3L833.2 275.3L840.1 281.4L846.4 286.6L852.8 290.9L859.3 294.3L865.7 297.2L871.9 299.9L878.0 302.5L884.0 304.8L889.9 306.9L895.8 308.9L901.6 310.7L907.3 312.4L912.9 314.0L918.5 315.6L924.0 317.2L929.5 318.8M822.8 274.7L831.4 283.8L838.4 289.9L844.9 295.1L851.5 299.3L858.1 302.6L864.6 305.4L871.0 308.0L877.2 310.5L883.3 312.7L889.3 314.7L895.3 316.5L901.2 318.2L907.0 319.8L912.7 321.4L918.4 322.8L924.0 324.4L929.6 325.9M820.9 283.1L829.5 292.4L836.7 298.5L843.4 303.6L850.1 307.6L856.8 310.9L863.5 313.5L870.0 316.1L876.3 318.5L882.6 320.6L888.7 322.4L894.8 324.1L900.8 325.7L906.7 327.3L912.5 328.7L918.3 330.1L924.0 331.5L929.6 333.0M818.9 291.5L827.6 300.9L834.8 307.0L841.7 312.0L848.6 316.0L855.5 319.1L862.3 321.7L869.0 324.1L875.4 326.4L881.8 328.4L888.1 330.2L894.3 331.7L900.4 333.3L906.4 334.7L912.3 336.0L918.2 337.3L924.0 338.7L929.7 340.1M816.8 299.8L825.5 309.4L832.9 315.5L840.0 320.4L847.1 324.3L854.2 327.4L861.1 329.8L867.9 332.1L874.5 334.4L881.0 336.3L887.4 337.9L893.7 339.4L899.9 340.8L906.1 342.1L912.1 343.3L918.1 344.5L924.0 345.9L929.8 347.3M814.6 308.2L823.4 317.9L831.0 324.0L838.3 328.8L845.6 332.6L852.8 335.6L859.9 338.0L866.8 340.2L873.6 342.3L880.2 344.1L886.7 345.6L893.2 347.0L899.5 348.3L905.7 349.5L911.9 350.6L918.0 351.7L924.0 353.0L929.9 354.4M812.7 316.6L821.6 326.4L829.3 332.5L836.8 337.3L844.2 341.0L851.6 343.9L858.8 346.1L865.9 348.2L872.7 350.3L879.5 352.0L886.1 353.4L892.7 354.6L899.1 355.8L905.5 356.9L911.8 357.9L917.9 359.0L924.0 360.2L930.0 361.5M811.2 325.0L820.0 335.0L827.9 341.1L835.6 345.8L843.1 349.4L850.6 352.2L858.0 354.3L865.1 356.3L872.1 358.3L878.9 359.9L885.7 361.1L892.3 362.3L898.9 363.3L905.3 364.3L911.7 365.2L917.9 366.2L924.1 367.3L930.2 368.6M810.0 333.6L818.9 343.7L826.8 349.8L834.6 354.3L842.3 357.9L849.9 360.6L857.4 362.6L864.6 364.4L871.6 366.3L878.6 367.8L885.4 368.9L892.1 369.9L898.7 370.9L905.2 371.7L911.6 372.6L918.0 373.4L924.2 374.5L930.3 375.7M809.2 342.2L818.0 352.4L826.0 358.5L833.9 362.9L841.7 366.4L849.4 369.0L856.9 370.8L864.2 372.6L871.3 374.3L878.3 375.7L885.2 376.7L892.0 377.6L898.6 378.4L905.2 379.2L911.7 379.9L918.0 380.7L924.3 381.7L930.5 382.8M808.9 350.8L817.6 361.1L825.6 367.2L833.6 371.5L841.4 374.9L849.2 377.4L856.8 379.1L864.1 380.7L871.3 382.4L878.3 383.7L885.2 384.6L892.0 385.3L898.7 386.0L905.3 386.6L911.8 387.2L918.2 387.9L924.5 388.9L930.6 390.0M809.8 359.3L818.3 369.8L826.2 375.9L834.2 380.1L842.1 383.4L849.7 385.8L857.3 387.4L864.6 388.9L871.8 390.4L878.7 391.6L885.6 392.4L892.4 393.0L899.1 393.5L905.6 394.1L912.1 394.6L918.4 395.2L924.7 396.0L930.8 397.1M812.5 367.5L820.6 378.1L828.3 384.3L836.2 388.4L843.8 391.6L851.4 393.9L858.8 395.4L866.1 396.8L873.0 398.3L879.9 399.4L886.7 400.0L893.3 400.5L899.9 401.0L906.3 401.4L912.6 401.8L918.9 402.4L925.0 403.2L931.0 404.2M829.8 241.0L839.9 241.0M828.2 249.4L838.2 249.5L846.3 247.0M826.4 257.8L836.6 258.1L844.8 255.6L851.9 252.7M824.7 266.3L834.9 266.7L843.2 264.2L850.6 261.2L857.7 257.3M822.8 274.7L833.2 275.3L841.7 272.8L849.2 269.7L856.5 265.7L863.7 261.1M820.9 283.1L831.4 283.8L840.1 281.4L847.8 278.2L855.3 274.1L862.6 269.4L869.6 264.4M818.9 291.5L829.5 292.4L838.4 289.9L846.4 286.6L854.1 282.5L861.5 277.7L868.6 272.6L875.3 267.6M816.8 299.8L827.6 300.9L836.7 298.5L844.9 295.1L852.8 290.9L860.4 286.0L867.7 280.8L874.5 275.7L881.0 270.6M814.6 308.2L825.5 309.4L834.8 307.0L843.4 303.6L851.5 299.3L859.3 294.3L866.7 289.0L873.7 283.8L880.3 278.6L886.6 273.3M812.7 316.6L823.4 317.9L832.9 315.5L841.7 312.0L850.1 307.6L858.1 302.6L865.7 297.2L872.8 291.9L879.5 286.6L886.0 281.2L892.1 275.9M811.2 325.0L821.6 326.4L831.0 324.0L840.0 320.4L848.6 316.0L856.8 310.9L864.6 305.4L871.9 299.9L878.8 294.5L885.3 289.1L891.6 283.6L897.6 278.3M810.0 333.6L820.0 335.0L829.3 332.5L838.3 328.8L847.1 324.3L855.5 319.1L863.5 313.5L871.0 308.0L878.0 302.5L884.7 297.0L891.0 291.4L897.1 285.9L903.0 280.6M809.2 342.2L818.9 343.7L827.9 341.1L836.8 337.3L845.6 332.6L854.2 327.4L862.3 321.7L870.0 316.1L877.2 310.5L884.0 304.8L890.5 299.2L896.7 293.6L902.6 288.1L908.3 282.7M808.9 350.8L818.0 352.4L826.8 349.8L835.6 345.8L844.2 341.0L852.8 335.6L861.1 329.8L869.0 324.1L876.3 318.5L883.3 312.7L889.9 306.9L896.2 301.2L902.3 295.6L908.0 290.2L913.6 284.8M809.8 359.3L817.6 361.1L826.0 358.5L834.6 354.3L843.1 349.4L851.6 343.9L859.9 338.0L867.9 332.1L875.4 326.4L882.6 320.6L889.3 314.7L895.8 308.9L901.9 303.2L907.8 297.6L913.4 292.1L918.8 286.7M812.5 367.5L818.3 369.8L825.6 367.2L833.9 362.9L842.3 357.9L850.6 352.2L858.8 346.1L866.8 340.2L874.5 334.4L881.8 328.4L888.7 322.4L895.3 316.5L901.6 310.7L907.5 305.0L913.3 299.4L918.8 293.9L924.1 288.5M820.6 378.1L826.2 375.9L833.6 371.5L841.7 366.4L849.9 360.6L858.0 354.3L865.9 348.2L873.6 342.3L881.0 336.3L888.1 330.2L894.8 324.1L901.2 318.2L907.3 312.4L913.1 306.7L918.7 301.1L924.0 295.7L929.2 290.3M828.3 384.3L834.2 380.1L841.4 374.9L849.4 369.0L857.4 362.6L865.1 356.3L872.7 350.3L880.2 344.1L887.4 337.9L894.3 331.7L900.8 325.7L907.0 319.8L912.9 314.0L918.6 308.4L924.0 302.9L929.3 297.4M836.2 388.4L842.1 383.4L849.2 377.4L856.9 370.8L864.6 364.4L872.1 358.3L879.5 352.0L886.7 345.6L893.7 339.4L900.4 333.3L906.7 327.3L912.7 321.4L918.5 315.6L924.0 310.0L929.3 304.5M843.8 391.6L849.7 385.8L856.8 379.1L864.2 372.6L871.6 366.3L878.9 359.9L886.1 353.4L893.2 347.0L899.9 340.8L906.4 334.7L912.5 328.7L918.4 322.8L924.0 317.2L929.4 311.7M851.4 393.9L857.3 387.4L864.1 380.7L871.3 374.3L878.6 367.8L885.7 361.1L892.7 354.6L899.5 348.3L906.1 342.1L912.3 336.0L918.3 330.1L924.0 324.4L929.5 318.8M858.8 395.4L864.6 388.9L871.3 382.4L878.3 375.7L885.4 368.9L892.3 362.3L899.1 355.8L905.7 349.5L912.1 343.3L918.2 337.3L924.0 331.5L929.6 325.9M866.1 396.8L871.8 390.4L878.3 383.7L885.2 376.7L892.1 369.9L898.9 363.3L905.5 356.9L911.9 350.6L918.1 344.5L924.0 338.7L929.6 333.0M873.0 398.3L878.7 391.6L885.2 384.6L892.0 377.6L898.7 370.9L905.3 364.3L911.8 357.9L918.0 351.7L924.0 345.9L929.7 340.1M879.9 399.4L885.6 392.4L892.0 385.3L898.6 378.4L905.2 371.7L911.7 365.2L917.9 359.0L924.0 353.0L929.8 347.3M886.7 400.0L892.4 393.0L898.7 386.0L905.2 379.2L911.6 372.6L917.9 366.2L924.0 360.2L929.9 354.4M893.3 400.5L899.1 393.5L905.3 386.6L911.7 379.9L918.0 373.4L924.1 367.3L930.0 361.5M899.9 401.0L905.6 394.1L911.8 387.2L918.0 380.7L924.2 374.5L930.2 368.6M906.3 401.4L912.1 394.6L918.2 387.9L924.3 381.7L930.3 375.7M912.6 401.8L918.4 395.2L924.5 388.9L930.5 382.8M918.9 402.4L924.7 396.0L930.6 390.0M925.0 403.2L930.8 397.1" stroke="#224788" stroke-width="0.95" stroke-opacity="0.9"/>
<path d="M929.2 290.3L929.3 296.3L929.3 302.3L929.4 308.3L929.4 314.3L929.5 320.3L929.6 326.3L929.6 332.3L929.7 338.3L929.8 344.3L929.9 350.3L930.0 356.2L930.1 362.2L930.2 368.2L930.3 374.2L930.4 380.2L930.6 386.2L930.7 392.2L930.8 398.2L931.0 404.2M934.2 291.7L934.3 297.7L934.4 303.6L934.5 309.5L934.6 315.5L934.7 321.4L934.8 327.3L934.9 333.2L935.0 339.2L935.1 345.1L935.3 351.0L935.4 356.9L935.5 362.9L935.6 368.8L935.8 374.7L935.9 380.7L936.1 386.6L936.2 392.5L936.3 398.4L936.4 404.4M939.3 293.2L939.4 299.0L939.5 304.9L939.7 310.8L939.8 316.6L940.0 322.5L940.1 328.4L940.3 334.2L940.4 340.1L940.6 346.0L940.7 351.9L940.9 357.7L941.0 363.6L941.2 369.5L941.3 375.3L941.5 381.2L941.6 387.1L941.7 392.9L941.8 398.8L941.9 404.7M944.4 294.5L944.6 300.4L944.7 306.2L944.9 312.0L945.1 317.8L945.3 323.7L945.5 329.5L945.6 335.3L945.8 341.1L946.0 347.0L946.2 352.8L946.4 358.6L946.6 364.5L946.7 370.3L946.9 376.1L947.0 382.0L947.2 387.8L947.3 393.6L947.4 399.4L947.4 405.3M949.6 295.8L949.8 301.6L950.0 307.4L950.2 313.2L950.4 319.0L950.6 324.8L950.9 330.6L951.1 336.4L951.3 342.2L951.5 348.0L951.7 353.9L951.9 359.7L952.1 365.5L952.3 371.3L952.5 377.1L952.7 382.9L952.8 388.7L952.9 394.5L952.9 400.3L953.0 406.1M954.9 297.0L955.1 302.8L955.4 308.6L955.6 314.4L955.8 320.1L956.1 325.9L956.4 331.7L956.6 337.5L956.9 343.3L957.1 349.1L957.4 354.9L957.6 360.7L957.8 366.5L958.0 372.3L958.2 378.1L958.3 383.9L958.4 389.7L958.5 395.5L958.5 401.3L958.6 407.1M960.3 298.0L960.5 303.8L960.8 309.6L961.1 315.4L961.3 321.2L961.6 326.9L961.9 332.7L962.2 338.5L962.5 344.3L962.8 350.1L963.1 355.8L963.3 361.6L963.5 367.4L963.8 373.2L963.9 379.0L964.1 384.8L964.2 390.6L964.2 396.3L964.2 402.1L964.2 407.9M965.7 299.1L966.0 304.9L966.3 310.6L966.6 316.4L966.9 322.1L967.2 327.9L967.6 333.7L967.9 339.4L968.2 345.2L968.6 350.9L968.8 356.7L969.1 362.5L969.4 368.3L969.6 374.0L969.8 379.8L969.9 385.6L970.0 391.3L970.0 397.1L970.0 402.9L970.0 408.6M971.3 300.1L971.6 305.9L971.9 311.6L972.2 317.4L972.6 323.1L972.9 328.9L973.3 334.6L973.7 340.3L974.1 346.1L974.4 351.8L974.7 357.6L975.0 363.3L975.3 369.1L975.5 374.8L975.7 380.6L975.9 386.3L975.9 392.1L975.9 397.8L975.9 403.6L975.8 409.3M976.9 301.2L977.2 307.0L977.6 312.7L977.9 318.4L978.3 324.1L978.7 329.8L979.1 335.6L979.6 341.3L979.9 347.0L980.3 352.7L980.7 358.4L981.0 364.2L981.3 369.9L981.5 375.6L981.7 381.4L981.9 387.1L981.9 392.8L981.9 398.6L981.9 404.3L981.8 410.0M982.6 302.4L982.9 308.1L983.3 313.8L983.7 319.5L984.1 325.2L984.6 330.9L985.1 336.6L985.5 342.2L985.9 347.9L986.3 353.6L986.7 359.3L987.0 365.0L987.4 370.7L987.6 376.5L987.9 382.2L988.0 387.9L988.1 393.6L988.0 399.3L987.9 405.0L987.8 410.7M988.4 303.6L988.8 309.2L989.2 314.9L989.6 320.6L990.1 326.2L990.6 331.9L991.1 337.5L991.6 343.2L992.0 348.9L992.5 354.5L992.9 360.2L993.2 365.9L993.6 371.5L993.9 377.2L994.1 382.9L994.3 388.6L994.3 394.2L994.2 399.9L994.1 405.6L993.9 411.2M994.3 304.8L994.7 310.4L995.2 316.0L995.7 321.6L996.2 327.2L996.7 332.9L997.3 338.5L997.8 344.1L998.3 349.7L998.8 355.3L999.2 360.9L999.6 366.6L999.9 372.2L1000.3 377.8L1000.5 383.5L1000.7 389.1L1000.7 394.8L1000.6 400.4L1000.4 406.0L1000.3 411.6M1000.4 306.0L1000.9 311.5L1001.4 317.1L1001.9 322.7L1002.4 328.2L1003.0 333.8L1003.6 339.4L1004.2 344.9L1004.7 350.5L1005.2 356.1L1005.7 361.6L1006.1 367.2L1006.5 372.8L1006.8 378.4L1007.1 384.0L1007.2 389.6L1007.2 395.2L1007.1 400.7L1007.0 406.3L1006.7 411.9M1006.7 307.2L1007.2 312.7L1007.7 318.2L1008.3 323.7L1008.8 329.3L1009.5 334.8L1010.1 340.3L1010.7 345.8L1011.3 351.3L1011.9 356.8L1012.4 362.3L1012.8 367.9L1013.2 373.4L1013.6 378.9L1013.8 384.5L1014.0 390.0L1014.0 395.6L1013.9 401.1L1013.7 406.6L1013.4 412.1M1013.2 308.5L1013.7 314.0L1014.3 319.4L1014.9 324.9L1015.5 330.4L1016.2 335.8L1016.9 341.3L1017.5 346.7L1018.2 352.2L1018.8 357.7L1019.3 363.1L1019.8 368.6L1020.2 374.1L1020.6 379.6L1020.9 385.1L1021.0 390.6L1021.0 396.0L1020.9 401.5L1020.6 407.0L1020.3 412.4M1020.0 310.0L1020.6 315.4L1021.2 320.8L1021.8 326.1L1022.5 331.5L1023.3 336.9L1024.0 342.3L1024.7 347.6L1025.4 353.0L1026.0 358.4L1026.6 363.8L1027.1 369.2L1027.6 374.6L1028.0 380.0L1028.2 385.4L1028.4 390.8L1028.4 396.2L1028.2 401.6L1028.0 407.0L1027.6 412.4M1027.4 311.7L1028.0 316.9L1028.6 322.1L1029.3 327.4L1030.0 332.6L1030.8 337.8L1031.6 342.9L1032.4 348.1L1033.1 353.3L1033.7 358.6L1034.4 363.8L1034.9 369.0L1035.4 374.2L1035.8 379.4L1036.1 384.7L1036.2 389.9L1036.2 395.1L1036.0 400.4L1035.7 405.6L1035.3 410.8M1036.5 314.0L1037.0 318.7L1037.5 323.4L1038.1 328.1L1038.7 332.8L1039.3 337.5L1040.0 342.2L1040.6 346.9L1041.2 351.6L1041.7 356.3L1042.2 361.0L1042.6 365.7L1043.0 370.5L1043.2 375.2L1043.3 379.9L1043.3 384.7L1043.1 389.4L1042.7 394.1L1042.1 398.8L1041.5 403.5M929.2 290.3L934.2 291.7L939.3 293.2L944.4 294.5L949.6 295.8L954.9 297.0L960.3 298.0L965.7 299.1L971.3 300.1L976.9 301.2L982.6 302.4L988.4 303.6L994.3 304.8L1000.4 306.0L1006.7 307.2L1013.2 308.5L1020.0 310.0L1027.4 311.7L1036.5 314.0M929.3 296.3L934.3 297.7L939.4 299.0L944.6 300.4L949.8 301.6L955.1 302.8L960.5 303.8L966.0 304.9L971.6 305.9L977.2 307.0L982.9 308.1L988.8 309.2L994.7 310.4L1000.9 311.5L1007.2 312.7L1013.7 314.0L1020.6 315.4L1028.0 316.9L1037.0 318.7M929.3 302.3L934.4 303.6L939.5 304.9L944.7 306.2L950.0 307.4L955.4 308.6L960.8 309.6L966.3 310.6L971.9 311.6L977.6 312.7L983.3 313.8L989.2 314.9L995.2 316.0L1001.4 317.1L1007.7 318.2L1014.3 319.4L1021.2 320.8L1028.6 322.1L1037.5 323.4M929.4 308.3L934.5 309.5L939.7 310.8L944.9 312.0L950.2 313.2L955.6 314.4L961.1 315.4L966.6 316.4L972.2 317.4L977.9 318.4L983.7 319.5L989.6 320.6L995.7 321.6L1001.9 322.7L1008.3 323.7L1014.9 324.9L1021.8 326.1L1029.3 327.4L1038.1 328.1M929.4 314.3L934.6 315.5L939.8 316.6L945.1 317.8L950.4 319.0L955.8 320.1L961.3 321.2L966.9 322.1L972.6 323.1L978.3 324.1L984.1 325.2L990.1 326.2L996.2 327.2L1002.4 328.2L1008.8 329.3L1015.5 330.4L1022.5 331.5L1030.0 332.6L1038.7 332.8M929.5 320.3L934.7 321.4L940.0 322.5L945.3 323.7L950.6 324.8L956.1 325.9L961.6 326.9L967.2 327.9L972.9 328.9L978.7 329.8L984.6 330.9L990.6 331.9L996.7 332.9L1003.0 333.8L1009.5 334.8L1016.2 335.8L1023.3 336.9L1030.8 337.8L1039.3 337.5M929.6 326.3L934.8 327.3L940.1 328.4L945.5 329.5L950.9 330.6L956.4 331.7L961.9 332.7L967.6 333.7L973.3 334.6L979.1 335.6L985.1 336.6L991.1 337.5L997.3 338.5L1003.6 339.4L1010.1 340.3L1016.9 341.3L1024.0 342.3L1031.6 342.9L1040.0 342.2M929.6 332.3L934.9 333.2L940.3 334.2L945.6 335.3L951.1 336.4L956.6 337.5L962.2 338.5L967.9 339.4L973.7 340.3L979.6 341.3L985.5 342.2L991.6 343.2L997.8 344.1L1004.2 344.9L1010.7 345.8L1017.5 346.7L1024.7 347.6L1032.4 348.1L1040.6 346.9M929.7 338.3L935.0 339.2L940.4 340.1L945.8 341.1L951.3 342.2L956.9 343.3L962.5 344.3L968.2 345.2L974.1 346.1L979.9 347.0L985.9 347.9L992.0 348.9L998.3 349.7L1004.7 350.5L1011.3 351.3L1018.2 352.2L1025.4 353.0L1033.1 353.3L1041.2 351.6M929.8 344.3L935.1 345.1L940.6 346.0L946.0 347.0L951.5 348.0L957.1 349.1L962.8 350.1L968.6 350.9L974.4 351.8L980.3 352.7L986.3 353.6L992.5 354.5L998.8 355.3L1005.2 356.1L1011.9 356.8L1018.8 357.7L1026.0 358.4L1033.7 358.6L1041.7 356.3M929.9 350.3L935.3 351.0L940.7 351.9L946.2 352.8L951.7 353.9L957.4 354.9L963.1 355.8L968.8 356.7L974.7 357.6L980.7 358.4L986.7 359.3L992.9 360.2L999.2 360.9L1005.7 361.6L1012.4 362.3L1019.3 363.1L1026.6 363.8L1034.4 363.8L1042.2 361.0M930.0 356.2L935.4 356.9L940.9 357.7L946.4 358.6L951.9 359.7L957.6 360.7L963.3 361.6L969.1 362.5L975.0 363.3L981.0 364.2L987.0 365.0L993.2 365.9L999.6 366.6L1006.1 367.2L1012.8 367.9L1019.8 368.6L1027.1 369.2L1034.9 369.0L1042.6 365.7M930.1 362.2L935.5 362.9L941.0 363.6L946.6 364.5L952.1 365.5L957.8 366.5L963.5 367.4L969.4 368.3L975.3 369.1L981.3 369.9L987.4 370.7L993.6 371.5L999.9 372.2L1006.5 372.8L1013.2 373.4L1020.2 374.1L1027.6 374.6L1035.4 374.2L1043.0 370.5M930.2 368.2L935.6 368.8L941.2 369.5L946.7 370.3L952.3 371.3L958.0 372.3L963.8 373.2L969.6 374.0L975.5 374.8L981.5 375.6L987.6 376.5L993.9 377.2L1000.3 377.8L1006.8 378.4L1013.6 378.9L1020.6 379.6L1028.0 380.0L1035.8 379.4L1043.2 375.2M930.3 374.2L935.8 374.7L941.3 375.3L946.9 376.1L952.5 377.1L958.2 378.1L963.9 379.0L969.8 379.8L975.7 380.6L981.7 381.4L987.9 382.2L994.1 382.9L1000.5 383.5L1007.1 384.0L1013.8 384.5L1020.9 385.1L1028.2 385.4L1036.1 384.7L1043.3 379.9M930.4 380.2L935.9 380.7L941.5 381.2L947.0 382.0L952.7 382.9L958.3 383.9L964.1 384.8L969.9 385.6L975.9 386.3L981.9 387.1L988.0 387.9L994.3 388.6L1000.7 389.1L1007.2 389.6L1014.0 390.0L1021.0 390.6L1028.4 390.8L1036.2 389.9L1043.3 384.7M930.6 386.2L936.1 386.6L941.6 387.1L947.2 387.8L952.8 388.7L958.4 389.7L964.2 390.6L970.0 391.3L975.9 392.1L981.9 392.8L988.1 393.6L994.3 394.2L1000.7 394.8L1007.2 395.2L1014.0 395.6L1021.0 396.0L1028.4 396.2L1036.2 395.1L1043.1 389.4M930.7 392.2L936.2 392.5L941.7 392.9L947.3 393.6L952.9 394.5L958.5 395.5L964.2 396.3L970.0 397.1L975.9 397.8L981.9 398.6L988.0 399.3L994.2 399.9L1000.6 400.4L1007.1 400.7L1013.9 401.1L1020.9 401.5L1028.2 401.6L1036.0 400.4L1042.7 394.1M930.8 398.2L936.3 398.4L941.8 398.8L947.4 399.4L952.9 400.3L958.5 401.3L964.2 402.1L970.0 402.9L975.9 403.6L981.9 404.3L987.9 405.0L994.1 405.6L1000.4 406.0L1007.0 406.3L1013.7 406.6L1020.6 407.0L1028.0 407.0L1035.7 405.6L1042.1 398.8M931.0 404.2L936.4 404.4L941.9 404.7L947.4 405.3L953.0 406.1L958.6 407.1L964.2 407.9L970.0 408.6L975.8 409.3L981.8 410.0L987.8 410.7L993.9 411.2L1000.3 411.6L1006.7 411.9L1013.4 412.1L1020.3 412.4L1027.6 412.4L1035.3 410.8L1041.5 403.5M930.8 398.2L936.4 404.4M930.7 392.2L936.3 398.4L941.9 404.7M930.6 386.2L936.2 392.5L941.8 398.8L947.4 405.3M930.4 380.2L936.1 386.6L941.7 392.9L947.4 399.4L953.0 406.1M930.3 374.2L935.9 380.7L941.6 387.1L947.3 393.6L952.9 400.3L958.6 407.1M930.2 368.2L935.8 374.7L941.5 381.2L947.2 387.8L952.9 394.5L958.5 401.3L964.2 407.9M930.1 362.2L935.6 368.8L941.3 375.3L947.0 382.0L952.8 388.7L958.5 395.5L964.2 402.1L970.0 408.6M930.0 356.2L935.5 362.9L941.2 369.5L946.9 376.1L952.7 382.9L958.4 389.7L964.2 396.3L970.0 402.9L975.8 409.3M929.9 350.3L935.4 356.9L941.0 363.6L946.7 370.3L952.5 377.1L958.3 383.9L964.2 390.6L970.0 397.1L975.9 403.6L981.8 410.0M929.8 344.3L935.3 351.0L940.9 357.7L946.6 364.5L952.3 371.3L958.2 378.1L964.1 384.8L970.0 391.3L975.9 397.8L981.9 404.3L987.8 410.7M929.7 338.3L935.1 345.1L940.7 351.9L946.4 358.6L952.1 365.5L958.0 372.3L963.9 379.0L969.9 385.6L975.9 392.1L981.9 398.6L987.9 405.0L993.9 411.2M929.6 332.3L935.0 339.2L940.6 346.0L946.2 352.8L951.9 359.7L957.8 366.5L963.8 373.2L969.8 379.8L975.9 386.3L981.9 392.8L988.0 399.3L994.1 405.6L1000.3 411.6M929.6 326.3L934.9 333.2L940.4 340.1L946.0 347.0L951.7 353.9L957.6 360.7L963.5 367.4L969.6 374.0L975.7 380.6L981.9 387.1L988.1 393.6L994.2 399.9L1000.4 406.0L1006.7 411.9M929.5 320.3L934.8 327.3L940.3 334.2L945.8 341.1L951.5 348.0L957.4 354.9L963.3 361.6L969.4 368.3L975.5 374.8L981.7 381.4L988.0 387.9L994.3 394.2L1000.6 400.4L1007.0 406.3L1013.4 412.1M929.4 314.3L934.7 321.4L940.1 328.4L945.6 335.3L951.3 342.2L957.1 349.1L963.1 355.8L969.1 362.5L975.3 369.1L981.5 375.6L987.9 382.2L994.3 388.6L1000.7 394.8L1007.1 400.7L1013.7 406.6L1020.3 412.4M929.4 308.3L934.6 315.5L940.0 322.5L945.5 329.5L951.1 336.4L956.9 343.3L962.8 350.1L968.8 356.7L975.0 363.3L981.3 369.9L987.6 376.5L994.1 382.9L1000.7 389.1L1007.2 395.2L1013.9 401.1L1020.6 407.0L1027.6 412.4M929.3 302.3L934.5 309.5L939.8 316.6L945.3 323.7L950.9 330.6L956.6 337.5L962.5 344.3L968.6 350.9L974.7 357.6L981.0 364.2L987.4 370.7L993.9 377.2L1000.5 383.5L1007.2 389.6L1014.0 395.6L1020.9 401.5L1028.0 407.0L1035.3 410.8M929.3 296.3L934.4 303.6L939.7 310.8L945.1 317.8L950.6 324.8L956.4 331.7L962.2 338.5L968.2 345.2L974.4 351.8L980.7 358.4L987.0 365.0L993.6 371.5L1000.3 377.8L1007.1 384.0L1014.0 390.0L1021.0 396.0L1028.2 401.6L1035.7 405.6L1041.5 403.5M929.2 290.3L934.3 297.7L939.5 304.9L944.9 312.0L950.4 319.0L956.1 325.9L961.9 332.7L967.9 339.4L974.1 346.1L980.3 352.7L986.7 359.3L993.2 365.9L999.9 372.2L1006.8 378.4L1013.8 384.5L1021.0 390.6L1028.4 396.2L1036.0 400.4L1042.1 398.8M934.2 291.7L939.4 299.0L944.7 306.2L950.2 313.2L955.8 320.1L961.6 326.9L967.6 333.7L973.7 340.3L979.9 347.0L986.3 353.6L992.9 360.2L999.6 366.6L1006.5 372.8L1013.6 378.9L1020.9 385.1L1028.4 390.8L1036.2 395.1L1042.7 394.1M939.3 293.2L944.6 300.4L950.0 307.4L955.6 314.4L961.3 321.2L967.2 327.9L973.3 334.6L979.6 341.3L985.9 347.9L992.5 354.5L999.2 360.9L1006.1 367.2L1013.2 373.4L1020.6 379.6L1028.2 385.4L1036.2 389.9L1043.1 389.4M944.4 294.5L949.8 301.6L955.4 308.6L961.1 315.4L966.9 322.1L972.9 328.9L979.1 335.6L985.5 342.2L992.0 348.9L998.8 355.3L1005.7 361.6L1012.8 367.9L1020.2 374.1L1028.0 380.0L1036.1 384.7L1043.3 384.7M949.6 295.8L955.1 302.8L960.8 309.6L966.6 316.4L972.6 323.1L978.7 329.8L985.1 336.6L991.6 343.2L998.3 349.7L1005.2 356.1L1012.4 362.3L1019.8 368.6L1027.6 374.6L1035.8 379.4L1043.3 379.9M954.9 297.0L960.5 303.8L966.3 310.6L972.2 317.4L978.3 324.1L984.6 330.9L991.1 337.5L997.8 344.1L1004.7 350.5L1011.9 356.8L1019.3 363.1L1027.1 369.2L1035.4 374.2L1043.2 375.2M960.3 298.0L966.0 304.9L971.9 311.6L977.9 318.4L984.1 325.2L990.6 331.9L997.3 338.5L1004.2 344.9L1011.3 351.3L1018.8 357.7L1026.6 363.8L1034.9 369.0L1043.0 370.5M965.7 299.1L971.6 305.9L977.6 312.7L983.7 319.5L990.1 326.2L996.7 332.9L1003.6 339.4L1010.7 345.8L1018.2 352.2L1026.0 358.4L1034.4 363.8L1042.6 365.7M971.3 300.1L977.2 307.0L983.3 313.8L989.6 320.6L996.2 327.2L1003.0 333.8L1010.1 340.3L1017.5 346.7L1025.4 353.0L1033.7 358.6L1042.2 361.0M976.9 301.2L982.9 308.1L989.2 314.9L995.7 321.6L1002.4 328.2L1009.5 334.8L1016.9 341.3L1024.7 347.6L1033.1 353.3L1041.7 356.3M982.6 302.4L988.8 309.2L995.2 316.0L1001.9 322.7L1008.8 329.3L1016.2 335.8L1024.0 342.3L1032.4 348.1L1041.2 351.6M988.4 303.6L994.7 310.4L1001.4 317.1L1008.3 323.7L1015.5 330.4L1023.3 336.9L1031.6 342.9L1040.6 346.9M994.3 304.8L1000.9 311.5L1007.7 318.2L1014.9 324.9L1022.5 331.5L1030.8 337.8L1040.0 342.2M1000.4 306.0L1007.2 312.7L1014.3 319.4L1021.8 326.1L1030.0 332.6L1039.3 337.5M1006.7 307.2L1013.7 314.0L1021.2 320.8L1029.3 327.4L1038.7 332.8M1013.2 308.5L1020.6 315.4L1028.6 322.1L1038.1 328.1M1020.0 310.0L1028.0 316.9L1037.5 323.4M1027.4 311.7L1037.0 318.7" stroke="#193468" stroke-width="1.05" stroke-opacity="0.9"/></g>
<path d="M831.5 232.5L837.1 233.2L842.7 234.1L848.3 235.5L853.7 237.2L859.1 239.0L864.5 240.6L870.0 242.2L875.4 244.0L880.7 245.9L886.1 247.8L891.5 249.6L896.9 251.4L902.2 253.4L907.5 255.6L912.7 257.8L918.0 259.9L923.3 261.9L928.7 263.7L934.1 265.4L939.4 267.4L944.4 270.1L949.2 273.2L954.0 276.2L959.0 278.9L964.2 281.3L969.3 283.7L974.4 286.3L979.4 288.9L984.4 291.6L989.4 294.4L994.4 297.1L999.4 299.8L1004.5 302.4L1009.6 304.7L1014.9 306.8L1020.3 308.7L1025.7 310.4L1031.1 312.2L1036.5 314.0L1036.5 314.0L1033.8 313.3L1031.0 312.6L1028.3 312.0L1025.6 311.3L1022.8 310.6L1020.1 310.0L1017.3 309.4L1014.6 308.8L1011.8 308.2L1009.0 307.6L1006.3 307.1L1003.5 306.6L1000.7 306.0L998.0 305.5L995.2 304.9L992.4 304.4L989.7 303.8L986.9 303.3L984.2 302.7L981.4 302.1L978.6 301.6L975.9 301.0L973.1 300.5L970.3 300.0L967.6 299.4L964.8 298.9L962.0 298.4L959.3 297.8L956.5 297.3L953.7 296.7L951.0 296.1L948.2 295.5L945.5 294.8L942.8 294.1L940.0 293.4L937.3 292.6L934.6 291.9L931.9 291.1L929.2 290.3L929.2 290.3L926.4 289.3L923.6 288.4L920.8 287.4L918.1 286.4L915.3 285.4L912.5 284.4L909.8 283.3L907.0 282.2L904.3 281.1L901.6 280.0L898.8 278.8L896.1 277.7L893.4 276.5L890.7 275.3L888.1 274.0L885.4 272.7L882.7 271.4L880.1 270.1L877.5 268.8L874.9 267.4L872.3 266.0L869.7 264.5L867.2 263.1L864.6 261.6L862.1 260.1L859.6 258.5L857.1 256.9L854.7 255.1L852.5 253.2L850.3 251.2L848.3 249.1L846.2 247.0L844.2 244.8L842.0 242.8L839.8 240.9L837.6 238.9L835.4 236.9L833.4 234.7L831.5 232.5Z" fill="url(#lidg)" stroke="none"/>
<path d="M831.5 232.5L835.1 233.1L838.8 233.8L842.4 234.6L846.0 235.6L849.5 236.8L853.0 238.1L856.5 239.4L860.1 240.6L863.6 241.7L867.2 242.9L870.7 244.1L874.3 245.4L877.8 246.7L881.3 248.0L884.9 249.2L888.4 250.5L892.0 251.7L895.5 253.0L899.0 254.3L902.5 255.7L906.0 257.1L909.5 258.6L912.9 260.0L916.4 261.4L919.9 262.8L923.5 264.1L927.0 265.3L930.6 266.4L934.2 267.6L937.7 268.9L941.1 270.5L944.4 272.3L947.6 274.3L950.8 276.2L954.1 278.1L957.4 279.8L960.8 281.3L964.3 282.9L967.7 284.4L971.1 286.0L974.5 287.6L977.8 289.3L981.2 291.0L984.5 292.7L987.8 294.4L991.2 296.1L994.5 297.9L997.8 299.6L1001.2 301.2L1004.6 302.8L1008.0 304.3L1011.5 305.7L1015.0 307.0L1018.6 308.2L1022.2 309.4L1025.8 310.5L1029.3 311.7L1032.9 312.8L1036.5 314.0M831.5 232.5L835.0 233.4L838.5 234.3L842.1 235.3L845.6 236.5L849.0 237.8L852.4 239.3L855.8 240.7L859.3 242.1L862.8 243.4L866.3 244.7L869.8 246.0L873.3 247.3L876.8 248.7L880.3 250.0L883.8 251.4L887.4 252.7L890.9 254.0L894.4 255.3L897.9 256.6L901.4 258.0L904.9 259.5L908.4 260.9L911.9 262.4L915.4 263.8L918.9 265.2L922.4 266.5L926.0 267.7L929.6 268.8L933.1 270.0L936.7 271.3L940.1 272.8L943.4 274.6L946.7 276.4L949.9 278.3L953.3 280.0L956.6 281.6L960.1 283.1L963.6 284.5L967.0 286.0L970.5 287.5L973.9 289.0L977.3 290.5L980.7 292.1L984.1 293.7L987.4 295.4L990.8 297.0L994.2 298.6L997.6 300.2L1001.0 301.7L1004.4 303.2L1007.9 304.7L1011.4 306.0L1015.0 307.2L1018.5 308.4L1022.1 309.5L1025.7 310.6L1029.3 311.7L1032.9 312.9L1036.5 314.0M831.5 232.5L834.9 233.6L838.3 234.8L841.7 236.0L845.2 237.3L848.5 238.9L851.8 240.5L855.1 242.1L858.5 243.6L861.9 245.0L865.4 246.4L868.9 247.8L872.4 249.2L875.8 250.7L879.3 252.1L882.8 253.5L886.3 254.9L889.8 256.2L893.4 257.6L896.9 259.0L900.4 260.4L903.8 261.9L907.3 263.3L910.8 264.8L914.3 266.2L917.8 267.6L921.3 268.9L924.9 270.1L928.5 271.3L932.1 272.5L935.6 273.7L939.1 275.2L942.5 276.9L945.8 278.6L949.1 280.4L952.4 282.0L955.9 283.5L959.4 284.9L962.9 286.2L966.4 287.6L969.8 289.0L973.3 290.4L976.7 291.8L980.2 293.3L983.6 294.8L987.0 296.3L990.4 297.8L993.9 299.3L997.3 300.8L1000.8 302.3L1004.2 303.7L1007.7 305.0L1011.3 306.2L1014.9 307.4L1018.5 308.5L1022.1 309.6L1025.7 310.7L1029.3 311.8L1032.9 312.9L1036.5 314.0M831.5 232.5L834.7 233.9L838.0 235.3L841.4 236.7L844.8 238.2L848.0 239.9L851.2 241.7L854.5 243.4L857.7 245.1L861.1 246.7L864.5 248.2L868.0 249.7L871.4 251.2L874.9 252.7L878.3 254.2L881.8 255.6L885.3 257.1L888.8 258.5L892.3 259.9L895.8 261.3L899.3 262.7L902.8 264.2L906.2 265.7L909.7 267.1L913.2 268.6L916.7 269.9L920.3 271.3L923.9 272.5L927.4 273.7L931.0 274.9L934.6 276.2L938.1 277.6L941.5 279.2L944.8 280.8L948.2 282.4L951.6 283.9L955.1 285.3L958.6 286.6L962.2 287.9L965.7 289.2L969.2 290.5L972.7 291.8L976.2 293.1L979.7 294.5L983.2 295.9L986.6 297.3L990.1 298.7L993.6 300.1L997.0 301.4L1000.5 302.8L1004.0 304.1L1007.6 305.3L1011.2 306.5L1014.8 307.6L1018.4 308.7L1022.0 309.7L1025.6 310.8L1029.3 311.8L1032.9 312.9L1036.5 314.0M831.5 232.5L834.6 234.2L837.8 235.8L841.1 237.4L844.3 239.1L847.5 240.9L850.6 242.9L853.8 244.8L857.0 246.6L860.3 248.4L863.6 250.0L867.0 251.5L870.5 253.1L873.9 254.7L877.3 256.2L880.8 257.8L884.2 259.3L887.7 260.7L891.2 262.2L894.7 263.6L898.2 265.1L901.7 266.6L905.2 268.1L908.6 269.5L912.2 270.9L915.7 272.3L919.2 273.7L922.8 274.9L926.4 276.1L930.0 277.3L933.5 278.6L937.1 280.0L940.5 281.4L943.9 283.0L947.3 284.5L950.8 285.9L954.3 287.2L957.9 288.4L961.5 289.6L965.0 290.8L968.6 291.9L972.1 293.2L975.7 294.4L979.2 295.7L982.7 296.9L986.2 298.2L989.7 299.5L993.3 300.8L996.8 302.1L1000.3 303.3L1003.9 304.5L1007.4 305.6L1011.1 306.7L1014.7 307.8L1018.3 308.8L1022.0 309.8L1025.6 310.9L1029.2 311.9L1032.9 312.9L1036.5 314.0M831.5 232.5L834.5 234.4L837.6 236.3L840.8 238.1L843.9 239.9L847.0 241.9L850.0 244.1L853.1 246.2L856.2 248.2L859.4 250.0L862.7 251.7L866.1 253.4L869.5 255.0L872.9 256.7L876.3 258.3L879.7 259.9L883.2 261.4L886.7 263.0L890.1 264.5L893.6 266.0L897.1 267.4L900.6 268.9L904.1 270.4L907.6 271.9L911.1 273.3L914.6 274.7L918.2 276.0L921.7 277.3L925.3 278.5L928.9 279.8L932.5 281.0L936.0 282.3L939.5 283.7L943.0 285.1L946.5 286.5L950.0 287.8L953.6 289.0L957.1 290.2L960.8 291.3L964.4 292.3L968.0 293.4L971.5 294.5L975.1 295.7L978.7 296.8L982.3 298.0L985.8 299.2L989.4 300.3L992.9 301.5L996.5 302.7L1000.1 303.8L1003.7 304.9L1007.3 306.0L1010.9 307.0L1014.6 308.0L1018.2 309.0L1021.9 309.9L1025.6 310.9L1029.2 311.9L1032.9 313.0L1036.5 314.0M831.5 232.5L834.4 234.7L837.3 236.8L840.4 238.7L843.5 240.8L846.5 243.0L849.4 245.3L852.4 247.5L855.4 249.7L858.6 251.7L861.8 253.5L865.2 255.3L868.5 257.0L871.9 258.7L875.3 260.4L878.7 262.0L882.2 263.6L885.6 265.2L889.1 266.8L892.5 268.3L896.0 269.8L899.5 271.3L903.0 272.8L906.5 274.3L910.0 275.7L913.6 277.1L917.1 278.4L920.7 279.7L924.3 281.0L927.9 282.2L931.4 283.4L935.0 284.7L938.6 286.0L942.1 287.3L945.6 288.6L949.2 289.8L952.8 290.9L956.4 291.9L960.1 292.9L963.7 293.9L967.3 294.9L971.0 295.9L974.6 297.0L978.2 298.0L981.8 299.1L985.4 300.1L989.0 301.2L992.6 302.2L996.3 303.3L999.9 304.3L1003.5 305.3L1007.2 306.3L1010.8 307.2L1014.5 308.2L1018.2 309.1L1021.8 310.1L1025.5 311.0L1029.2 312.0L1032.8 313.0L1036.5 314.0M831.5 232.5L834.2 234.9L837.1 237.3L840.1 239.4L843.1 241.6L846.0 244.0L848.8 246.4L851.7 248.9L854.6 251.2L857.7 253.3L860.9 255.3L864.2 257.1L867.6 258.9L870.9 260.7L874.3 262.4L877.7 264.2L881.1 265.8L884.5 267.5L888.0 269.0L891.5 270.6L894.9 272.1L898.4 273.7L901.9 275.2L905.4 276.6L908.9 278.1L912.5 279.5L916.0 280.8L919.6 282.1L923.2 283.4L926.8 284.6L930.4 285.8L934.0 287.1L937.6 288.3L941.2 289.5L944.7 290.7L948.4 291.7L952.0 292.8L955.7 293.7L959.4 294.6L963.0 295.5L966.7 296.4L970.4 297.3L974.0 298.2L977.7 299.2L981.4 300.1L985.0 301.1L988.7 302.0L992.3 303.0L996.0 303.9L999.7 304.8L1003.3 305.7L1007.0 306.6L1010.7 307.5L1014.4 308.4L1018.1 309.3L1021.8 310.2L1025.5 311.1L1029.1 312.1L1032.8 313.0L1036.5 314.0M831.5 232.5L834.1 235.2L836.8 237.7L839.8 240.1L842.7 242.5L845.5 245.0L848.2 247.6L851.0 250.2L853.8 252.7L856.9 255.0L860.1 257.0L863.3 259.0L866.6 260.9L870.0 262.7L873.3 264.5L876.7 266.3L880.1 268.0L883.5 269.7L886.9 271.3L890.4 272.9L893.8 274.5L897.3 276.0L900.8 277.5L904.4 279.0L907.9 280.4L911.4 281.8L915.0 283.2L918.6 284.5L922.1 285.8L925.7 287.0L929.4 288.3L933.0 289.4L936.6 290.6L940.2 291.7L943.9 292.7L947.5 293.7L951.2 294.6L954.9 295.5L958.7 296.3L962.4 297.1L966.1 297.9L969.8 298.7L973.5 299.5L977.2 300.3L980.9 301.2L984.6 302.0L988.3 302.9L992.0 303.7L995.7 304.5L999.4 305.3L1003.2 306.1L1006.9 306.9L1010.6 307.8L1014.3 308.6L1018.0 309.4L1021.7 310.3L1025.4 311.2L1029.1 312.1L1032.8 313.1L1036.5 314.0M835.9 233.0L834.5 235.9M840.2 233.6L837.6 239.0M844.5 234.5L840.9 241.9M848.7 235.6L844.2 244.9M852.8 236.9L847.2 248.0M856.9 238.3L850.3 251.2M861.1 239.5L853.6 254.1M865.2 240.8L857.1 256.8M869.4 242.0L860.7 259.3M873.5 243.4L864.5 261.5M877.6 244.8L868.4 263.7M881.7 246.3L872.2 265.9M885.8 247.7L876.1 268.0M889.9 249.1L880.0 270.1M894.1 250.5L883.9 272.0M898.2 251.9L887.9 273.9M902.2 253.5L891.9 275.8M906.2 255.1L895.9 277.6M910.3 256.8L900.0 279.3M914.3 258.4L904.0 281.0M918.3 260.1L908.1 282.7M922.3 261.6L912.2 284.3M926.5 263.0L916.3 285.8M930.6 264.3L920.5 287.4M934.7 265.6L924.7 288.8M938.8 267.2L928.8 290.2M942.7 269.1L933.1 291.5M946.4 271.4L937.3 292.7M950.0 273.7L941.5 293.9M953.7 276.0L945.8 294.9M957.5 278.1L950.1 295.9M961.4 280.0L954.4 296.8M965.4 281.8L958.7 297.7M969.3 283.7L963.1 298.6M973.2 285.7L967.4 299.4M977.0 287.7L971.7 300.2M980.9 289.7L976.1 301.1M984.7 291.8L980.4 302.0M988.5 293.9L984.7 302.8M992.3 296.0L989.0 303.7M996.1 298.1L993.3 304.6M999.9 300.1L997.7 305.4M1003.8 302.1L1002.0 306.3M1007.7 303.9L1006.3 307.1M1011.7 305.6L1010.7 308.0M1015.8 307.1L1015.0 308.9M1019.9 308.5L1019.3 309.8M1024.0 309.9L1023.6 310.8M1028.2 311.2L1027.9 311.8M1032.3 312.6L1032.1 312.9" stroke="#142a55" stroke-width="0.8" stroke-opacity="0.7"/>
<path d="M812.5 367.5L814.3 370.3L816.2 373.0L818.2 375.6L820.5 378.0L822.9 380.3L825.4 382.3L828.2 384.2L831.0 385.9L834.0 387.4L837.0 388.8L840.0 390.1L843.1 391.3L846.2 392.4L849.3 393.4L852.5 394.2L855.7 394.9L859.0 395.5L862.2 396.0L865.5 396.7L868.7 397.4L871.9 398.1L875.2 398.7L878.4 399.2L881.7 399.6L885.0 399.9L888.3 400.1L891.6 400.4L894.9 400.6L898.2 400.9L901.5 401.1L904.8 401.3L908.1 401.6L911.4 401.8L914.6 402.0L917.9 402.3L921.2 402.7L924.5 403.1L927.7 403.6L931.0 404.2" stroke="#172f5e" stroke-width="8" stroke-opacity="0.4"/>
<path d="M931.0 404.2L933.9 404.3L936.9 404.4L939.8 404.5L942.8 404.7L945.7 405.0L948.6 405.4L951.5 405.9L954.4 406.4L957.3 406.9L960.2 407.3L963.2 407.7L966.1 408.1L969.0 408.5L971.9 408.9L974.8 409.2L977.8 409.6L980.7 409.9L983.6 410.2L986.5 410.5L989.5 410.8L992.4 411.1L995.3 411.3L998.3 411.5L1001.2 411.7L1004.2 411.8L1007.1 411.9L1010.1 412.0L1013.0 412.1L1015.9 412.2L1018.9 412.4L1021.8 412.5L1024.8 412.5L1027.7 412.4L1030.6 412.0L1033.5 411.4L1036.2 410.3L1038.6 408.6L1040.3 406.2L1041.5 403.5" stroke="#162c58" stroke-width="11" stroke-opacity="0.62"/>
<path d="M831.5 232.5L830.8 236.0L830.1 239.4L829.5 242.9L828.8 246.4L828.1 249.8L827.4 253.3L826.7 256.8L826.0 260.2L825.2 263.7L824.5 267.1L823.7 270.6L823.0 274.1L822.2 277.5L821.4 280.9L820.6 284.4L819.8 287.8L818.9 291.3L818.1 294.7L817.2 298.1L816.3 301.5L815.4 304.9L814.6 308.4L813.7 311.8L813.0 315.3L812.2 318.7L811.6 322.2L811.1 325.7L810.6 329.2L810.1 332.7L809.8 336.2L809.4 339.7L809.1 343.3L808.9 346.8L808.9 350.3L809.1 353.9L809.5 357.4L810.2 360.8L811.3 364.2L812.5 367.5" stroke="#1d3a70" stroke-width="5" stroke-opacity="0.4"/>
<path d="M1036.5 314.0L1036.7 316.3L1037.0 318.6L1037.2 320.9L1037.5 323.2L1037.7 325.5L1038.0 327.8L1038.3 330.0L1038.6 332.3L1038.9 334.6L1039.2 336.9L1039.6 339.2L1039.9 341.5L1040.2 343.8L1040.5 346.0L1040.8 348.3L1041.1 350.6L1041.4 352.9L1041.6 355.2L1041.9 357.5L1042.1 359.8L1042.3 362.1L1042.5 364.4L1042.7 366.7L1042.9 369.0L1043.0 371.3L1043.1 373.6L1043.2 375.9L1043.3 378.2L1043.3 380.5L1043.3 382.8L1043.3 385.1L1043.2 387.4L1043.0 389.7L1042.9 392.0L1042.6 394.3L1042.4 396.6L1042.1 398.9L1041.8 401.2L1041.5 403.5" stroke="#1d3a70" stroke-width="6" stroke-opacity="0.45"/>
</g>
<path d="M831.5 232.5L837.1 233.2L842.7 234.1L848.3 235.5L853.7 237.2L859.1 239.0L864.5 240.6L870.0 242.2L875.4 244.0L880.7 245.9L886.1 247.8L891.5 249.6L896.9 251.4L902.2 253.4L907.5 255.6L912.7 257.8L918.0 259.9L923.3 261.9L928.7 263.7L934.1 265.4L939.4 267.4L944.4 270.1L949.2 273.2L954.0 276.2L959.0 278.9L964.2 281.3L969.3 283.7L974.4 286.3L979.4 288.9L984.4 291.6L989.4 294.4L994.4 297.1L999.4 299.8L1004.5 302.4L1009.6 304.7L1014.9 306.8L1020.3 308.7L1025.7 310.4L1031.1 312.2L1036.5 314.0L1036.5 314.0L1036.7 316.3L1037.0 318.6L1037.2 320.9L1037.5 323.2L1037.7 325.5L1038.0 327.8L1038.3 330.0L1038.6 332.3L1038.9 334.6L1039.2 336.9L1039.6 339.2L1039.9 341.5L1040.2 343.8L1040.5 346.0L1040.8 348.3L1041.1 350.6L1041.4 352.9L1041.6 355.2L1041.9 357.5L1042.1 359.8L1042.3 362.1L1042.5 364.4L1042.7 366.7L1042.9 369.0L1043.0 371.3L1043.1 373.6L1043.2 375.9L1043.3 378.2L1043.3 380.5L1043.3 382.8L1043.3 385.1L1043.2 387.4L1043.0 389.7L1042.9 392.0L1042.6 394.3L1042.4 396.6L1042.1 398.9L1041.8 401.2L1041.5 403.5L1041.5 403.5L1040.3 406.2L1038.6 408.6L1036.2 410.3L1033.5 411.4L1030.6 412.0L1027.7 412.4L1024.8 412.5L1021.8 412.5L1018.9 412.4L1015.9 412.2L1013.0 412.1L1010.1 412.0L1007.1 411.9L1004.2 411.8L1001.2 411.7L998.3 411.5L995.3 411.3L992.4 411.1L989.5 410.8L986.5 410.5L983.6 410.2L980.7 409.9L977.8 409.6L974.8 409.2L971.9 408.9L969.0 408.5L966.1 408.1L963.2 407.7L960.2 407.3L957.3 406.9L954.4 406.4L951.5 405.9L948.6 405.4L945.7 405.0L942.8 404.7L939.8 404.5L936.9 404.4L933.9 404.3L931.0 404.2L931.0 404.2L927.7 403.6L924.5 403.1L921.2 402.7L917.9 402.3L914.6 402.0L911.4 401.8L908.1 401.6L904.8 401.3L901.5 401.1L898.2 400.9L894.9 400.6L891.6 400.4L888.3 400.1L885.0 399.9L881.7 399.6L878.4 399.2L875.2 398.7L871.9 398.1L868.7 397.4L865.5 396.7L862.2 396.0L859.0 395.5L855.7 394.9L852.5 394.2L849.3 393.4L846.2 392.4L843.1 391.3L840.0 390.1L837.0 388.8L834.0 387.4L831.0 385.9L828.2 384.2L825.4 382.3L822.9 380.3L820.5 378.0L818.2 375.6L816.2 373.0L814.3 370.3L812.5 367.5L812.5 367.5L811.3 364.2L810.2 360.8L809.5 357.4L809.1 353.9L808.9 350.3L808.9 346.8L809.1 343.3L809.4 339.7L809.8 336.2L810.1 332.7L810.6 329.2L811.1 325.7L811.6 322.2L812.2 318.7L813.0 315.3L813.7 311.8L814.6 308.4L815.4 304.9L816.3 301.5L817.2 298.1L818.1 294.7L818.9 291.3L819.8 287.8L820.6 284.4L821.4 280.9L822.2 277.5L823.0 274.1L823.7 270.6L824.5 267.1L825.2 263.7L826.0 260.2L826.7 256.8L827.4 253.3L828.1 249.8L828.8 246.4L829.5 242.9L830.1 239.4L830.8 236.0L831.5 232.5Z" fill="none" stroke="#21437c" stroke-width="1" stroke-opacity="0.8"/>
<g stroke-width="1.3" fill="none">
<path d="M929.3 275 V290.8" stroke="#fff" stroke-width="1.7"/>
<path d="M929.3 290.8 V403" stroke="url(#wl)" stroke-dasharray="4 1.5"/>
<path d="M812.1 342.9 L905.6 401.4" stroke="#ece82a" stroke-opacity="0.9" stroke-width="1.5" stroke-dasharray="2.2 3.2"/>
<path d="M951.8 408.4 L1042 376.3" stroke="#d8492c" stroke-opacity="0.62" stroke-width="1" stroke-dasharray="2 2.8"/>
<path d="M929.3 416.3 L774.2 471" stroke="#7fe628"/>
<path d="M929.3 416.3 L1046.2 489.3" stroke="#1428f4"/>
</g>
</svg><!--MESH_END-->
  <div id="homebtn" class="abs"><svg style="position:absolute;left:0;top:0" width="28.4" height="28.4" viewBox="1162.2 589.2 28.4 28.4"><g fill="none" stroke="#2a2a2a" stroke-width="1.55">
        <path d="M1169.8 604.2 L1175.9 598.6 L1182 604.2"/><path d="M1171.8 603.2 V608.2 H1180 V603.2"/><path d="M1175.9 608.2 V604.8"/><path d="M1178.8 600.4 V598" stroke-width="1.5"/></g></svg></div>
  <div id="homelbl" class="abs">Home</div>
  <div id="wflabel" class="abs">Gamut View Workflow</div>
  <div id="gicon" class="abs"><div id="ggrid" class="abs"></div><div id="ghorse" class="abs"></div></div>
  <div id="gvlabel" class="abs">Gamut View</div>
  <svg class="abs" style="left:293px;top:378px" width="9" height="14" viewBox="0 0 9 14"><path d="M0.8 7.3 L8 1.4 L8 13.3 Z" fill="#dcdcdc"/></svg>
  <div id="help" class="abs">
    <h1>Help</h1>
    <div class="hd">Gamut Viewer</div>
    <p style="top:75px">Use the Gamut Viewer tool to compare the color spaces<br>of up to 4 ICC color profiles.</p>
    <p style="top:112px">The gamut viewer supports printer and display profiles<br>created by i1Profiler.</p>
    <p style="top:148px">Use the Add and Remove buttons to bring profiles into<br>the viewer.</p>
    <p style="top:185px">You can bring any number of profiles in to the list, but<br>only four gamuts can be compared at one time.</p>
    <p style="top:221px">The viewer will display the profile name, the profile type<br>and the display color of the gamut.</p>
    <p style="top:258px">Use your mouse or trackpad to rotate and zoom the<br>gamut view.</p>
  </div>
  <div id="toolbar" class="abs">
    <svg class="abs" style="left:0;top:-0.6px" width="1198" height="37" viewBox="1 748 1198 37">
      <g fill="#1c1c1c" stroke="#e6e6e6" stroke-opacity="0.55" stroke-width="0.8" paint-order="stroke">
        <path d="M38.7 757.5 H45.2 L43 759.7 L45.6 762.3 L43.6 764.3 L41 761.7 L38.7 764 Z"/>
        <path d="M52 769.8 H45.5 L47.7 767.6 L45.1 765 L47.1 763 L49.7 765.6 L52 763.3 Z"/>
      </g>
      <g fill="none" stroke="#1c1c1c" stroke-width="1.6" stroke-linejoin="miter">
        <path d="M129.2 764.4 L135.4 758.8 L141.6 764.4"/>
        <path d="M131.2 763.4 V768.6 H139.6 V763.4"/>
        <path d="M135.4 768.6 V765"/>
        <path d="M138.4 760.6 V758.2" stroke-width="1.5"/>
      </g>
      <g fill="#1c1c1c">
        <circle cx="1071.6" cy="760.6" r="0.95"/><circle cx="1074.9" cy="760.6" r="0.95"/><circle cx="1078.2" cy="760.6" r="0.95"/><circle cx="1081.5" cy="760.6" r="0.95"/><circle cx="1084.8" cy="760.6" r="0.95"/><circle cx="1087.6" cy="760.6" r="0.8"/>
        <rect x="1079" y="762.8" width="8.5" height="4.4" fill="#5c5c5c"/>
        <path d="M1084 764.2 H1089.3 V762 L1093.8 765 L1089.3 768 V765.8 H1084 Z" stroke="#e8e8e8" stroke-width="0.7" paint-order="stroke"/>
        <circle cx="1138.4" cy="761.2" r="0.95"/><circle cx="1141.7" cy="761.2" r="0.95"/><circle cx="1145" cy="761.2" r="0.95"/><circle cx="1148" cy="761.2" r="0.95"/>
        <rect x="1149" y="758.5" width="9.3" height="9.6" rx="0.8"/>
        <rect x="1151.6" y="758.9" width="4.6" height="3" fill="#e8e8e8"/><rect x="1154" y="759.3" width="1" height="2.2" fill="#1c1c1c"/>
        <rect x="1151" y="764" width="5.8" height="4.1" fill="#cfcfcf"/>
        <path d="M1144.6 765.4 H1148.2 V763.8 L1151 766 L1148.2 768.2 V766.6 H1144.6 Z" stroke="#e8e8e8" stroke-width="0.7" paint-order="stroke"/>
      </g>
      <g stroke="#f2f2f2" stroke-width="1.1" fill="none"><path d="M1189.5 785 L1199 775.5 M1192.5 785 L1199 778.5 M1195.5 785 L1199 781.5"/></g>
    </svg>
    <div class="abs" style="left:84px;top:7.4px;width:18px;text-align:center;font-size:16px;line-height:16px;font-weight:bold;color:#1c1c1c;">?</div>
    <div class="tl" style="left:25px;letter-spacing:-0.15px">Full Screen</div>
    <div class="tl" style="left:85.5px">Help</div>
    <div class="tl" style="left:125px">Home</div>
    <div class="tl" style="left:1054px;letter-spacing:0.1px">Load Workflow</div>
    <div class="tl" style="left:1120px;letter-spacing:0.1px">Save Workflow</div>
  </div>
</div>
</body>
</html>
